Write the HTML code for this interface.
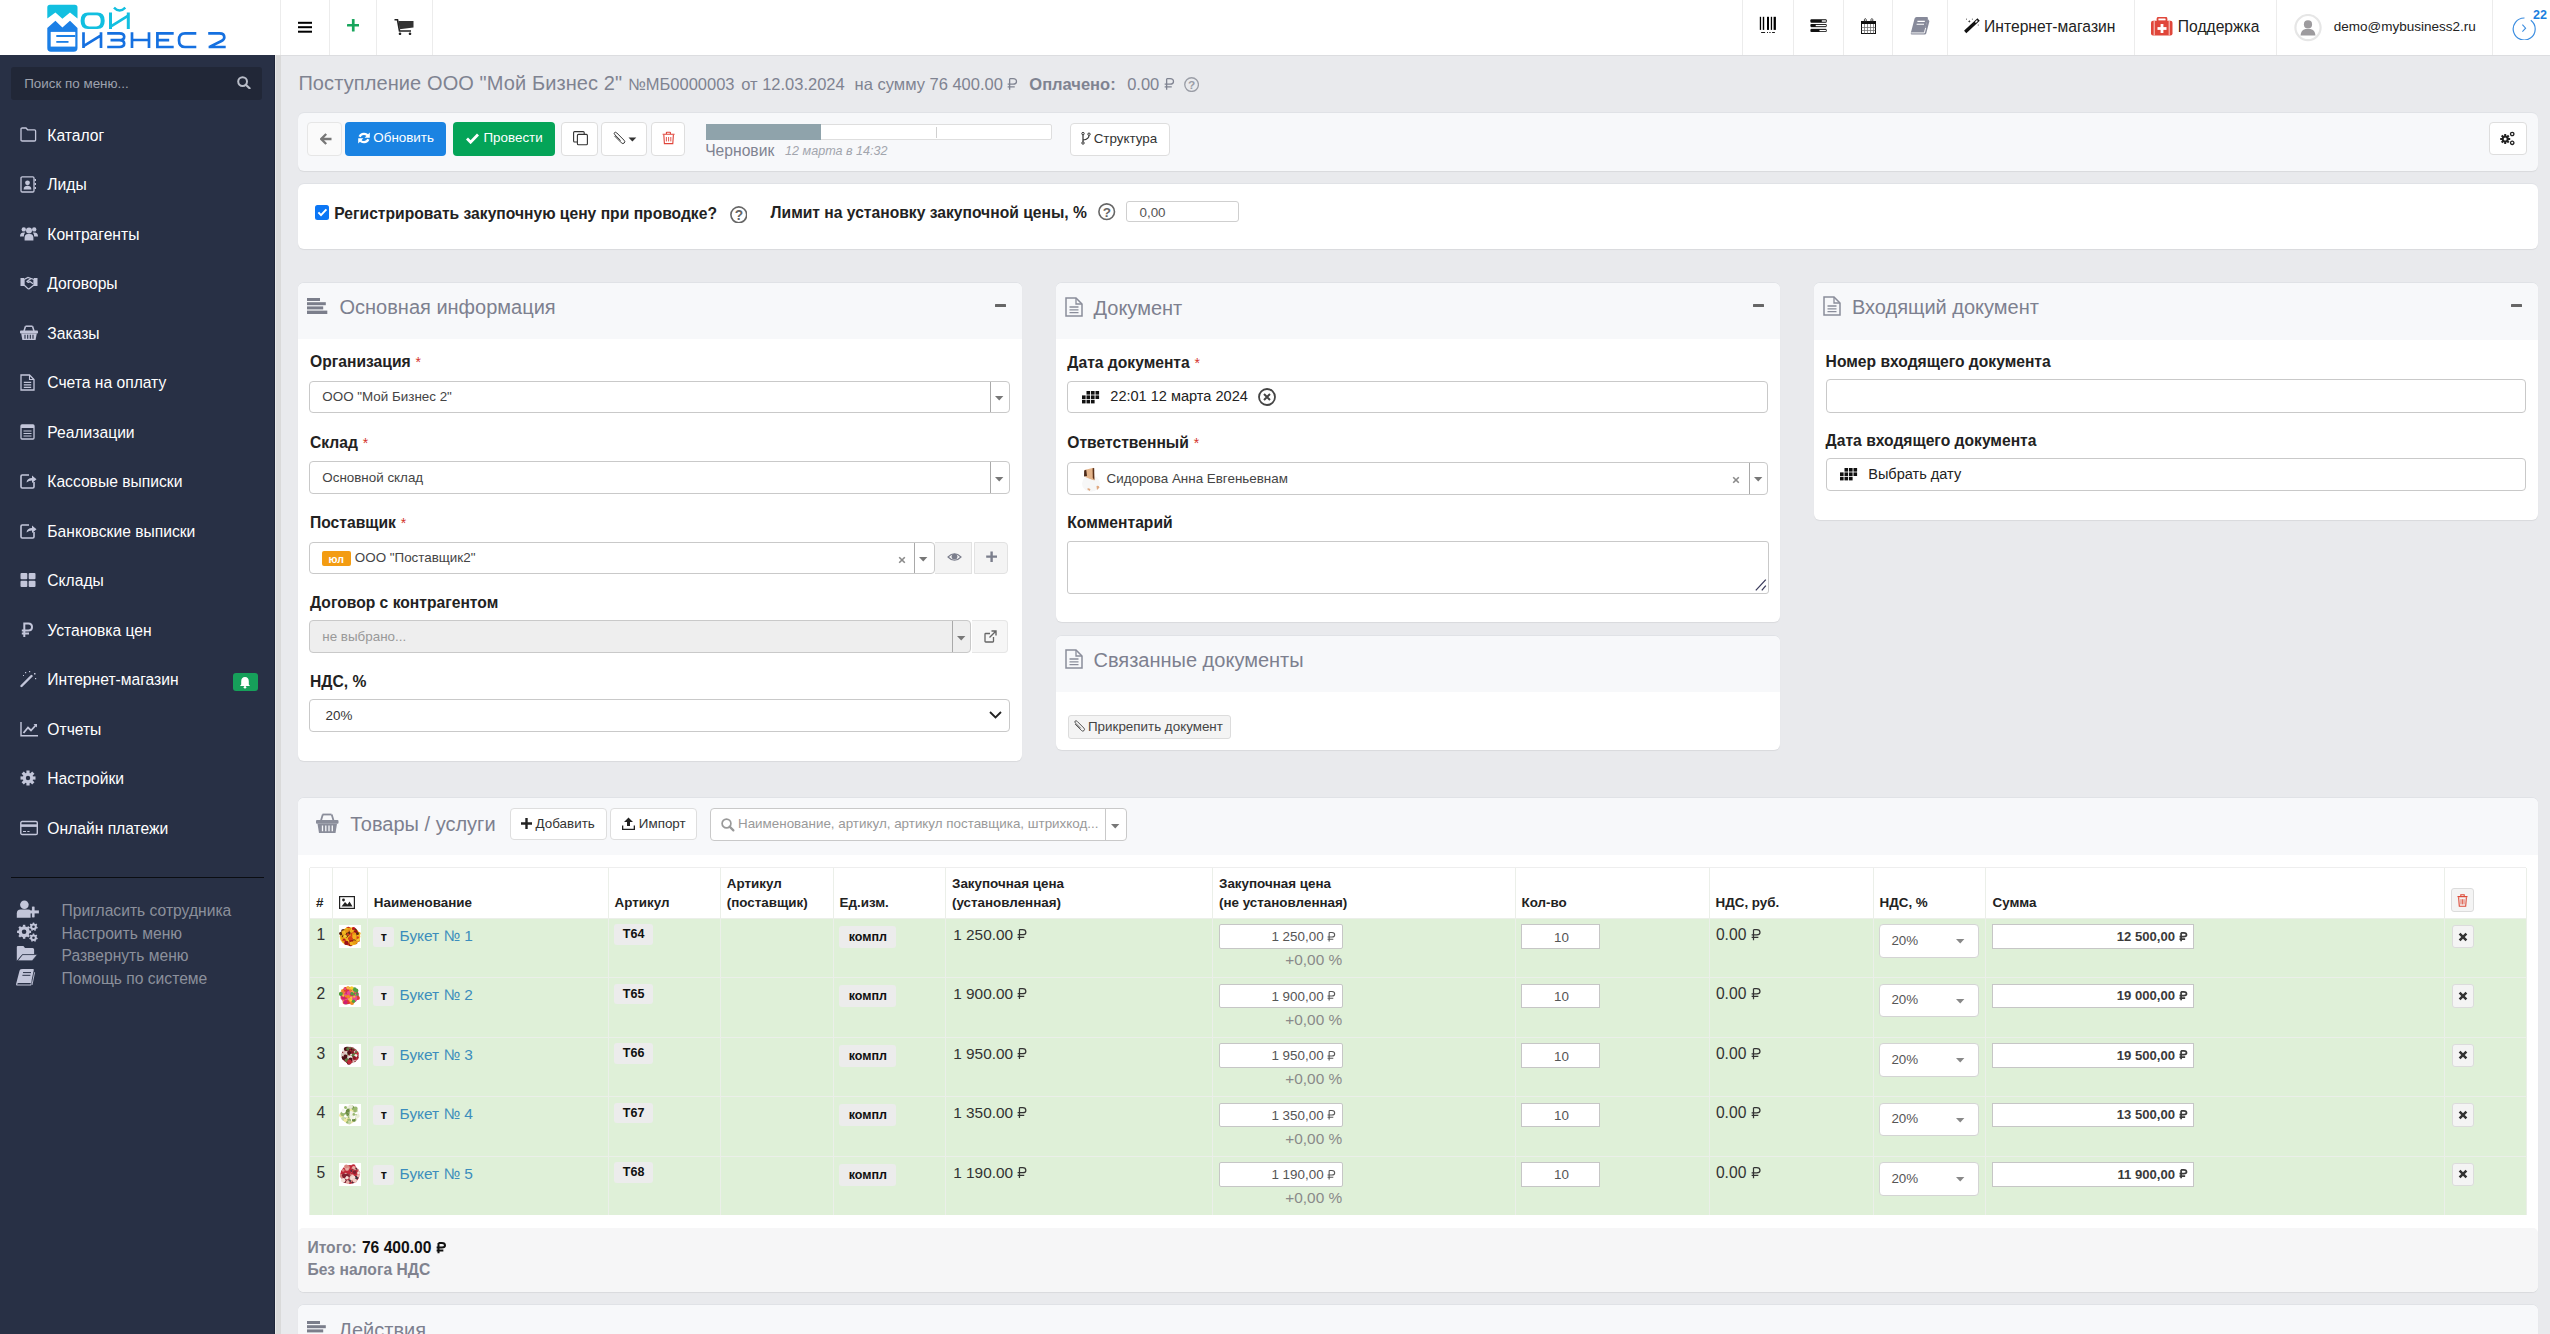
<!DOCTYPE html>
<html><head><meta charset="utf-8"><title>Поступление</title>
<style>
html,body{margin:0;padding:0;width:2550px;height:1334px;overflow:hidden;position:relative;font-family:"Liberation Sans",sans-serif;}
.t{position:absolute;white-space:nowrap;line-height:1;}
.b{position:absolute;box-sizing:border-box;}
.rub{display:inline-block;vertical-align:baseline;overflow:visible;}
</style></head><body>
<div class="b" style="left:0.00px;top:0.00px;width:2550.00px;height:1334.00px;background:#e9eaed;"></div><div class="b" style="left:0.00px;top:0.00px;width:2550.00px;height:55.00px;background:#fff;"></div><div class="b" style="left:281.00px;top:55.00px;width:2269.00px;height:1.00px;background:#dcdde0;"></div><div class="b" style="left:280.00px;top:0.00px;width:1.00px;height:55.00px;background:#ececec;"></div><div class="b" style="left:329.00px;top:0.00px;width:1.00px;height:55.00px;background:#ececec;"></div><div class="b" style="left:376.00px;top:0.00px;width:1.00px;height:55.00px;background:#ececec;"></div><div class="b" style="left:431.80px;top:0.00px;width:1.00px;height:55.00px;background:#ececec;"></div><div class="b" style="left:1742.00px;top:0.00px;width:1.00px;height:55.00px;background:#ececec;"></div><div class="b" style="left:1793.00px;top:0.00px;width:1.00px;height:55.00px;background:#ececec;"></div><div class="b" style="left:1842.80px;top:0.00px;width:1.00px;height:55.00px;background:#ececec;"></div><div class="b" style="left:1891.90px;top:0.00px;width:1.00px;height:55.00px;background:#ececec;"></div><div class="b" style="left:1947.10px;top:0.00px;width:1.00px;height:55.00px;background:#ececec;"></div><div class="b" style="left:2133.50px;top:0.00px;width:1.00px;height:55.00px;background:#ececec;"></div><div class="b" style="left:2275.80px;top:0.00px;width:1.00px;height:55.00px;background:#ececec;"></div><div class="b" style="left:2491.90px;top:0.00px;width:1.00px;height:55.00px;background:#ececec;"></div><svg class="b" style="left:0;top:0" width="275" height="55" viewBox="0 0 275 55">
<path d="M47.3,7.5 Q47.3,4.7 50,4.7 L74.8,4.7 Q77.5,4.7 77.5,7.5 L77.5,18.5 L70,12.5 L62.4,18.8 L55.4,12.5 L47.3,18.5 Z" fill="#12bfe0"/>
<path d="M47.3,28 L55.4,20.7 L62.4,27.6 L70,20.7 L77.5,28 L77.5,48 Q77.5,51.8 73.7,51.8 L51,51.8 Q47.3,51.8 47.3,48 Z" fill="#1b7fe6"/>
<path d="M50.7,31.9 L75.3,31.9 L75.3,46.6 L50.7,46.6 Z" fill="#fff"/>
<rect x="56.3" y="35" width="19" height="2" fill="#1b7fe6"/>
<rect x="56.3" y="41" width="12.2" height="1.8" fill="#1b7fe6"/>
<path fill-rule="evenodd" fill="#12bfe0" d="M88,12.6 L97.4,12.6 Q104.7,12.6 104.7,20.8 Q104.7,29.1 97.4,29.1 L88,29.1 Q80.6,29.1 80.6,20.8 Q80.6,12.6 88,12.6 Z M89.2,15.2 Q84.6,15.2 84.6,20.8 Q84.6,26.4 89.2,26.4 L96.2,26.4 Q100.7,26.4 100.7,20.8 Q100.7,15.2 96.2,15.2 Z"/>
<g fill="none" stroke="#12bfe0" stroke-width="3">
<path d="M110.5,12.6 L110.5,28.9 M128.3,12.6 L128.3,28.9"/>
<path d="M110.5,26.6 L128.3,15.6" stroke-width="2.8"/>
<path d="M114,7.6 Q119.6,13.4 125.3,7.6" stroke-width="2.5"/>
</g>
<g fill="none" stroke="#1570e0" stroke-width="2.7">
<path d="M83.5,32.3 L83.5,48 M101,32.3 L101,48 M83.5,46.2 L101,35.4"/>
<path d="M107.2,33.4 L119.5,33.4 Q124.2,33.4 124.2,36.8 Q124.2,40.2 119.5,40.2 L110.5,40.2 M119.5,40.2 Q124.2,40.2 124.2,43.6 Q124.2,47 119.5,47 L107.2,47"/>
<path d="M132,32.3 L132,48 M149,32.3 L149,48 M132,40 L149,40"/>
<path d="M173.7,33.4 L157.4,33.4 L157.4,47 L173.7,47 M157.4,40.2 L169.2,40.2"/>
<path d="M196.3,33.4 L185,33.4 Q179,33.4 179,40.2 Q179,47 185,47 L196.3,47"/>
<path d="M208.2,33.4 L219.5,33.4 Q224.3,33.4 224.3,37.2 Q224.3,39.6 221.5,41 L210,46.6 M208.6,47 L225.7,47"/>
</g>
</svg><svg class="b" style="left:298.00px;top:21.00px;" width="14.00" height="12.00" viewBox="0 0 14 12"><rect x="0" y="0.8" width="14" height="2" fill="#000"/><rect x="0" y="5.2" width="14" height="2" fill="#000"/><rect x="0" y="9.7" width="14" height="2" fill="#000"/></svg><svg class="b" style="left:346.50px;top:19.40px;" width="12.50" height="12.50" viewBox="0 0 12.5 12.5"><rect x="4.9" y="0" width="2.7" height="12.5" fill="#18a55c" rx="0.6"/><rect x="0" y="4.9" width="12.5" height="2.7" fill="#18a55c" rx="0.6"/></svg><svg class="b" style="left:393.50px;top:19.00px;" width="20.00" height="16.00" viewBox="0 0 20 16"><path d="M0.5,0.8 L3.5,0.8 L5.5,12 L17,12" fill="none" stroke="#222" stroke-width="1.6"/><path d="M4.4,2 L19.5,2 L19.5,8.5 L5.6,10.2 Z" fill="#333"/><circle cx="6" cy="14.8" r="1.3" fill="#222"/><circle cx="16" cy="14.8" r="1.3" fill="#222"/></svg><svg class="b" style="left:1755.00px;top:12.00px;overflow:visible;" width="30.00" height="28.00" viewBox="1755 12 30 28"><g fill="#000"><rect x="1759.8" y="16.8" width="1.3" height="13.1"/><rect x="1762.8" y="16.8" width="1.4" height="13.1"/><rect x="1767" y="16.8" width="2" height="13.1"/><rect x="1770.8" y="16.8" width="1.3" height="13.1"/><rect x="1773.6" y="16.8" width="2.3" height="13.1"/><rect x="1761.1" y="32" width="4" height="0.9"/><rect x="1767" y="32" width="1" height="0.9"/><rect x="1769.3" y="32" width="1.3" height="0.9"/><rect x="1772.1" y="32" width="2.8" height="0.9"/></g></svg><svg class="b" style="left:1805.00px;top:12.00px;overflow:visible;" width="30.00" height="28.00" viewBox="1805 12 30 28"><g><rect x="1810.4" y="19.3" width="16.3" height="3.5" rx="1" fill="#111"/><rect x="1810.4" y="24.1" width="16.3" height="2.9" rx="1" fill="#111"/><rect x="1810.4" y="29" width="16.3" height="3" rx="1" fill="#111"/><rect x="1821.8" y="20.3" width="4.1" height="1.4" fill="#fff"/><rect x="1815.7" y="24.9" width="10.2" height="1.3" fill="#fff"/><rect x="1819.5" y="29.9" width="6.4" height="1.3" fill="#fff"/><rect x="1811" y="27" width="15.2" height="2" fill="#d8d8d8"/></g></svg><svg class="b" style="left:1855.00px;top:12.00px;overflow:visible;" width="30.00" height="28.00" viewBox="1855 12 30 28"><rect x="1861.5" y="21.5" width="14" height="12" fill="none" stroke="#111" stroke-width="1"/><path d="M1864.5,24 V33.4 M1867.5,24 V33.4 M1870.5,24 V33.4 M1873.5,24 V33.4 M1861.6,27.5 H1875.4 M1861.6,30.5 H1875.4" stroke="#666" stroke-width="0.7"/><rect x="1861" y="21" width="15" height="3" fill="#111"/><g fill="none" stroke="#222" stroke-width="0.9"><path d="M1864.4,22 V19.6 Q1865.3,17.4 1866.2,19.6 V22 M1871,22 V19.6 Q1871.9,17.4 1872.8,19.6 V22"/></g></svg><svg class="b" style="left:1905.00px;top:12.00px;overflow:visible;" width="30.00" height="28.00" viewBox="1905 12 30 28"><path d="M1929.4,21.2 L1926.2,33.6 Q1925.9,34.6 1924.8,34.6 L1912,34.6 Q1910.4,34.6 1910.8,33 L1911.1,31.8 L1924.4,31.8 L1927.6,18.4 Z" fill="#878a9a"/><path d="M1916.6,17.1 L1926.8,17.1 Q1928.2,17.1 1927.9,18.4 L1924.6,31.3 Q1924.4,32.3 1923.2,32.3 L1911,32.3 L1914.6,18.6 Q1915,17.1 1916.6,17.1 Z" fill="#878a9a"/><path d="M1911.2,32.9 L1924.4,32.9 L1925.6,28" fill="none" stroke="#fff" stroke-width="0.9"/><path d="M1917.4,21.4 H1924.8 M1916.6,24.2 H1924" stroke="#fff" stroke-width="1.1"/></svg><svg class="b" style="left:1960.00px;top:12.00px;overflow:visible;" width="25.00" height="28.00" viewBox="1960 12 25 28"><path d="M1966.4,30.8 L1977.4,20.6" stroke="#111" stroke-width="3.3" stroke-linecap="square"/><path d="M1975.4,22.5 L1977.4,20.6" stroke="#fff" stroke-width="1.4"/><g fill="#333"><path d="M1969.3,19.9 L1969.8,20.9 L1970.8,21.3 L1969.8,21.7 L1969.3,22.7 L1968.8,21.7 L1967.8,21.3 L1968.8,20.9 Z"/><rect x="1966" y="18.7" width="0.9" height="0.9"/><rect x="1971.9" y="18.7" width="0.9" height="0.9"/><rect x="1977.8" y="24.6" width="0.9" height="0.9"/></g></svg><div class="t" style="top:18.95px;font-size:15.65px;color:#222;left:1984.10px;">Интернет-магазин</div><svg class="b" style="left:2151.00px;top:17.00px;" width="22.00" height="19.00" viewBox="0 0 22 19"><rect x="6.5" y="0.5" width="9" height="4" rx="1.5" fill="none" stroke="#e0463a" stroke-width="1.8"/><rect x="0" y="3.8" width="21.5" height="14.8" rx="2" fill="#e0463a"/><rect x="2.6" y="3.8" width="1.3" height="14.8" fill="#f6b2aa"/><rect x="17.6" y="3.8" width="1.3" height="14.8" fill="#f6b2aa"/><rect x="9.6" y="7" width="2.8" height="9" fill="#fff"/><rect x="6.5" y="10.1" width="9" height="2.8" fill="#fff"/></svg><div class="t" style="top:18.85px;font-size:15.65px;color:#222;left:2177.80px;">Поддержка</div><svg class="b" style="left:2294.00px;top:14.00px;" width="28.00" height="28.00" viewBox="0 0 28 28"><circle cx="14" cy="13.6" r="12.6" fill="#fff" stroke="#e6e6e6" stroke-width="2.2"/><circle cx="14" cy="10.4" r="4.1" fill="#9d9b9e"/><path d="M6.5,21.5 Q7,15.6 11.5,15 L16.5,15 Q21,15.6 21.5,21.5 Z" fill="#9d9b9e"/></svg><div class="t" style="top:20.17px;font-size:13.50px;color:#222;left:2333.80px;">demo@mybusiness2.ru</div><svg class="b" style="left:2511.00px;top:16.00px;" width="26.00" height="24.00" viewBox="0 0 26 24"><path d="M19.8,4.2 A11,11 0 1 1 13.5,2" fill="none" stroke="#3b8de0" stroke-width="1.2"/><path d="M11.4,8.7 L14.6,12.2 L11.4,15.6" fill="none" stroke="#3b8de0" stroke-width="1.1"/></svg><div class="t" style="top:9.22px;font-size:12.50px;color:#1b7fe0;left:2533.00px;font-weight:bold;">22</div><div class="b" style="left:0.00px;top:55.00px;width:275.00px;height:1279.00px;background:#283045;"></div><div class="b" style="left:274.00px;top:55.00px;width:1.00px;height:1279.00px;background:#1e2538;"></div><div class="b" style="left:275.00px;top:55.00px;width:1.00px;height:1279.00px;background:#e8e8e8;"></div><div class="b" style="left:276.00px;top:55.00px;width:5.00px;height:1279.00px;background:#dadada;"></div><div class="b" style="left:11.00px;top:67.00px;width:251.00px;height:33.00px;background:#212737;border-radius:3px;"></div><div class="t" style="top:76.66px;font-size:13.40px;color:#9ea2ae;left:24.20px;">Поиск по меню...</div><svg class="b" style="left:236.60px;top:76.30px;" width="14.00" height="13.00" viewBox="0 0 14 13"><circle cx="5.6" cy="5.6" r="4.4" fill="none" stroke="#b9bdc8" stroke-width="2"/><path d="M8.8,8.8 L12.6,12.3" stroke="#b9bdc8" stroke-width="2.2" stroke-linecap="round"/></svg><div class="t" style="top:127.65px;font-size:15.65px;color:#ffffff;left:47.30px;">Каталог</div><svg class="b" style="left:19.50px;top:126.60px;" width="19.00" height="17.00" viewBox="0 0 19 17"><path d="M1,2.2 Q1,1 2.2,1 L6,1 L7.6,2.8 L14.5,2.8 Q15.6,2.8 15.6,4 L15.6,13 Q15.6,14 14.5,14 L2.2,14 Q1,14 1,13 Z" fill="none" stroke="#c3c6da" stroke-width="1.3"/></svg><div class="t" style="top:177.15px;font-size:15.65px;color:#ffffff;left:47.30px;">Лиды</div><svg class="b" style="left:19.50px;top:176.10px;" width="19.00" height="17.00" viewBox="0 0 19 17"><rect x="1" y="0.8" width="13" height="15.2" rx="1.2" fill="none" stroke="#c3c6da" stroke-width="1.3"/><circle cx="7.5" cy="6.8" r="2.4" fill="#c3c6da"/><path d="M3.6,13.4 Q3.6,9.8 7.5,9.8 Q11.4,9.8 11.4,13.4 Z" fill="#c3c6da"/><rect x="14.6" y="3" width="1.4" height="2" fill="#c3c6da"/><rect x="14.6" y="7" width="1.4" height="2" fill="#c3c6da"/><rect x="14.6" y="11" width="1.4" height="2" fill="#c3c6da"/></svg><div class="t" style="top:226.65px;font-size:15.65px;color:#ffffff;left:47.30px;">Контрагенты</div><svg class="b" style="left:19.50px;top:225.60px;" width="19.00" height="17.00" viewBox="0 0 19 17"><g fill="#c3c6da"><circle cx="3.8" cy="3.4" r="2.2"/><circle cx="14.2" cy="3.4" r="2.2"/><circle cx="9" cy="4.4" r="3"/><path d="M0,10.5 Q0,6.6 3.6,6.6 L5.2,6.6 Q3.8,8 3.8,10.5 Z"/><path d="M18,10.5 Q18,6.6 14.4,6.6 L12.8,6.6 Q14.2,8 14.2,10.5 Z"/><path d="M4.6,14.5 L4.6,11.8 Q4.6,8 8,8 L10,8 Q13.4,8 13.4,11.8 L13.4,14.5 Z"/></g></svg><div class="t" style="top:276.15px;font-size:15.65px;color:#ffffff;left:47.30px;">Договоры</div><svg class="b" style="left:19.50px;top:275.10px;" width="19.00" height="17.00" viewBox="0 0 19 17"><path d="M0.5,3 L4,3 L4,11 L0.5,11 Z M17.5,3 L14,3 L14,11 L17.5,11 Z" fill="#c3c6da"/><path d="M4,4.5 L8,2.5 L11,3.5 L14,4.5 L14,10 L9.5,13.5 Q8.5,14.3 7.6,13.4 L4,10 Z" fill="none" stroke="#c3c6da" stroke-width="1.3"/><path d="M11,3.5 L7,6.5 Q8,8 10,6.5 L13,8.8" fill="none" stroke="#c3c6da" stroke-width="1.3"/></svg><div class="t" style="top:325.65px;font-size:15.65px;color:#ffffff;left:47.30px;">Заказы</div><svg class="b" style="left:19.50px;top:324.60px;" width="19.00" height="17.00" viewBox="0 0 19 17"><path d="M5.5,1.2 L12.5,1.2" stroke="#c3c6da" stroke-width="1.5"/><path d="M4,6 L5.5,1.2 M14,6 L12.5,1.2" stroke="#c3c6da" stroke-width="1.5"/><rect x="0" y="5.5" width="18" height="3" rx="0.8" fill="#c3c6da"/><path d="M1.2,8.5 L16.8,8.5 L15.6,15 L2.4,15 Z" fill="#c3c6da"/><path d="M5,9.8 V13.8 M7.7,9.8 V13.8 M10.3,9.8 V13.8 M13,9.8 V13.8" stroke="#283045" stroke-width="1.1"/></svg><div class="t" style="top:375.15px;font-size:15.65px;color:#ffffff;left:47.30px;">Счета на оплату</div><svg class="b" style="left:19.50px;top:374.10px;" width="19.00" height="17.00" viewBox="0 0 19 17"><path d="M1,1 L9.5,1 L14,5.5 L14,16 L1,16 Z" fill="none" stroke="#c3c6da" stroke-width="1.3"/><path d="M9.5,1 L9.5,5.5 L14,5.5" fill="none" stroke="#c3c6da" stroke-width="1.1"/><path d="M3.8,8.3 H11.2 M3.8,10.8 H11.2 M3.8,13.3 H11.2" stroke="#c3c6da" stroke-width="1.2"/></svg><div class="t" style="top:424.65px;font-size:15.65px;color:#ffffff;left:47.30px;">Реализации</div><svg class="b" style="left:19.50px;top:423.60px;" width="19.00" height="17.00" viewBox="0 0 19 17"><rect x="1" y="1" width="13" height="14" rx="1" fill="none" stroke="#c3c6da" stroke-width="1.3"/><rect x="1" y="1" width="13" height="3" fill="#c3c6da"/><path d="M3.5,7 H11.5 M3.5,9.5 H11.5 M3.5,12 H11.5" stroke="#c3c6da" stroke-width="1.2"/></svg><div class="t" style="top:474.15px;font-size:15.65px;color:#ffffff;left:47.30px;">Кассовые выписки</div><svg class="b" style="left:19.50px;top:473.10px;" width="19.00" height="17.00" viewBox="0 0 19 17"><path d="M9,2 L2.2,2 Q1,2 1,3.2 L1,13.8 Q1,15 2.2,15 L12.8,15 Q14,15 14,13.8 L14,9" fill="none" stroke="#c3c6da" stroke-width="1.6"/><path d="M6.5,9.5 Q7,5 12,5 L12,2.5 L16.5,6.3 L12,10 L12,7.5 Q9,7.5 6.5,9.5 Z" fill="#c3c6da"/></svg><div class="t" style="top:523.65px;font-size:15.65px;color:#ffffff;left:47.30px;">Банковские выписки</div><svg class="b" style="left:19.50px;top:522.60px;" width="19.00" height="17.00" viewBox="0 0 19 17"><path d="M9,2 L2.2,2 Q1,2 1,3.2 L1,13.8 Q1,15 2.2,15 L12.8,15 Q14,15 14,13.8 L14,9" fill="none" stroke="#c3c6da" stroke-width="1.6"/><path d="M6.5,9.5 Q7,5 12,5 L12,2.5 L16.5,6.3 L12,10 L12,7.5 Q9,7.5 6.5,9.5 Z" fill="#c3c6da"/></svg><div class="t" style="top:573.15px;font-size:15.65px;color:#ffffff;left:47.30px;">Склады</div><svg class="b" style="left:19.50px;top:572.10px;" width="19.00" height="17.00" viewBox="0 0 19 17"><g fill="#c3c6da"><rect x="0.5" y="1" width="6.8" height="6.3" rx="1"/><rect x="8.7" y="1" width="6.8" height="6.3" rx="1"/><rect x="0.5" y="8.7" width="6.8" height="6.3" rx="1"/><rect x="8.7" y="8.7" width="6.8" height="6.3" rx="1"/></g></svg><div class="t" style="top:622.65px;font-size:15.65px;color:#ffffff;left:47.30px;">Установка цен</div><svg class="b" style="left:19.50px;top:621.60px;" width="19.00" height="17.00" viewBox="0 0 19 17"><path d="M4.3,15 L4.3,1.5 L8.3,1.5 Q12,1.5 12,5 Q12,8.5 8.3,8.5 L1.8,8.5 M1.8,11.5 L9,11.5" fill="none" stroke="#c3c6da" stroke-width="2"/></svg><div class="t" style="top:672.15px;font-size:15.65px;color:#ffffff;left:47.30px;">Интернет-магазин</div><svg class="b" style="left:19.50px;top:671.10px;" width="19.00" height="17.00" viewBox="0 0 19 17"><path d="M1.5,15 L11.5,5" stroke="#c3c6da" stroke-width="2.4" stroke-linecap="round"/><g fill="#c3c6da"><rect x="5" y="1" width="1.2" height="1.2"/><rect x="9" y="0" width="1.2" height="1.2"/><rect x="15" y="7" width="1.2" height="1.2"/><rect x="14" y="2" width="1.5" height="1.5"/><rect x="3" y="4" width="1" height="1"/></g></svg><div class="t" style="top:721.65px;font-size:15.65px;color:#ffffff;left:47.30px;">Отчеты</div><svg class="b" style="left:19.50px;top:720.60px;" width="19.00" height="17.00" viewBox="0 0 19 17"><path d="M1,1 L1,14.8 L18,14.8" fill="none" stroke="#c3c6da" stroke-width="1.4"/><path d="M3.5,12 L8,6.5 L11,9.5 L16.5,3.5" fill="none" stroke="#c3c6da" stroke-width="1.8"/><path d="M13.5,3 L17,3 L17,6.5 Z" fill="#c3c6da"/></svg><div class="t" style="top:771.15px;font-size:15.65px;color:#ffffff;left:47.30px;">Настройки</div><svg class="b" style="left:19.50px;top:770.10px;" width="19.00" height="17.00" viewBox="0 0 19 17"><g transform="translate(8,8)"><circle r="5.2" fill="#c3c6da"/><g fill="#c3c6da"><rect x="-1.6" y="-7.5" width="3.2" height="3.5" transform="rotate(0)"/><rect x="-1.6" y="-7.5" width="3.2" height="3.5" transform="rotate(45)"/><rect x="-1.6" y="-7.5" width="3.2" height="3.5" transform="rotate(90)"/><rect x="-1.6" y="-7.5" width="3.2" height="3.5" transform="rotate(135)"/><rect x="-1.6" y="-7.5" width="3.2" height="3.5" transform="rotate(180)"/><rect x="-1.6" y="-7.5" width="3.2" height="3.5" transform="rotate(225)"/><rect x="-1.6" y="-7.5" width="3.2" height="3.5" transform="rotate(270)"/><rect x="-1.6" y="-7.5" width="3.2" height="3.5" transform="rotate(315)"/></g><circle r="2.2" fill="#283045"/></g></svg><div class="t" style="top:820.65px;font-size:15.65px;color:#ffffff;left:47.30px;">Онлайн платежи</div><svg class="b" style="left:19.50px;top:819.60px;" width="19.00" height="17.00" viewBox="0 0 19 17"><rect x="0.8" y="1.5" width="16.5" height="13" rx="1.3" fill="none" stroke="#c3c6da" stroke-width="1.4"/><rect x="0.8" y="4.3" width="16.5" height="2.6" fill="#c3c6da"/><path d="M3,11.5 H6 M7.3,11.5 H9.5" stroke="#c3c6da" stroke-width="1"/></svg><div class="b" style="left:232.70px;top:673.20px;width:25.30px;height:17.80px;background:#16a05a;border-radius:3px;"></div><svg class="b" style="left:239.00px;top:675.50px;" width="12.00" height="13.00" viewBox="0 0 12 13"><path d="M6,1 Q9.8,1 9.8,5.5 L9.8,8.5 L11,10 L1,10 L2.2,8.5 L2.2,5.5 Q2.2,1 6,1 Z" fill="#fff"/><circle cx="6" cy="11.3" r="1.3" fill="#fff"/></svg><div class="b" style="left:11.00px;top:876.60px;width:253.00px;height:1.20px;background:#0b0d12;"></div><div class="t" style="top:902.75px;font-size:15.65px;color:#8c909c;left:61.50px;">Пригласить сотрудника</div><div class="t" style="top:925.55px;font-size:15.65px;color:#8c909c;left:61.50px;">Настроить меню</div><div class="t" style="top:947.55px;font-size:15.65px;color:#8c909c;left:61.50px;">Развернуть меню</div><div class="t" style="top:970.65px;font-size:15.65px;color:#8c909c;left:61.50px;">Помощь по системе</div><svg class="b" style="left:12.00px;top:895.00px;overflow:visible;" width="32.00" height="95.00" viewBox="12 895 32 95"><circle cx="24.4" cy="904.8" r="4.3" fill="#c3c6da"/><path d="M16.8,917.7 L16.8,913.5 Q16.8,909.6 20.6,909.6 L28.2,909.6 Q30.2,909.6 30.6,911 L30.6,917.7 Z" fill="#c3c6da"/><rect x="31.8" y="906.3" width="3" height="11.4" fill="#c3c6da" stroke="#283045" stroke-width="0.8"/><rect x="27.5" y="910.4" width="11.4" height="3" fill="#c3c6da"/><rect x="32.2" y="906.7" width="2.2" height="10.6" fill="#c3c6da"/><g transform="translate(24.1,931.8)"><circle r="5.6" fill="#c3c6da"/><rect x="-1.2" y="-7" width="2.4" height="2" fill="#c3c6da" transform="rotate(0)"/><rect x="-1.2" y="-7" width="2.4" height="2" fill="#c3c6da" transform="rotate(45)"/><rect x="-1.2" y="-7" width="2.4" height="2" fill="#c3c6da" transform="rotate(90)"/><rect x="-1.2" y="-7" width="2.4" height="2" fill="#c3c6da" transform="rotate(135)"/><rect x="-1.2" y="-7" width="2.4" height="2" fill="#c3c6da" transform="rotate(180)"/><rect x="-1.2" y="-7" width="2.4" height="2" fill="#c3c6da" transform="rotate(225)"/><rect x="-1.2" y="-7" width="2.4" height="2" fill="#c3c6da" transform="rotate(270)"/><rect x="-1.2" y="-7" width="2.4" height="2" fill="#c3c6da" transform="rotate(315)"/><circle r="2.3" fill="#283045"/></g><g transform="translate(33.5,926.8)"><circle r="3.3" fill="#c3c6da"/><rect x="-0.75" y="-4.2" width="1.5" height="1.5" fill="#c3c6da" transform="rotate(0)"/><rect x="-0.75" y="-4.2" width="1.5" height="1.5" fill="#c3c6da" transform="rotate(51.4286)"/><rect x="-0.75" y="-4.2" width="1.5" height="1.5" fill="#c3c6da" transform="rotate(102.857)"/><rect x="-0.75" y="-4.2" width="1.5" height="1.5" fill="#c3c6da" transform="rotate(154.286)"/><rect x="-0.75" y="-4.2" width="1.5" height="1.5" fill="#c3c6da" transform="rotate(205.714)"/><rect x="-0.75" y="-4.2" width="1.5" height="1.5" fill="#c3c6da" transform="rotate(257.143)"/><rect x="-0.75" y="-4.2" width="1.5" height="1.5" fill="#c3c6da" transform="rotate(308.571)"/><circle r="1.3" fill="#283045"/></g><g transform="translate(33.5,937.7)"><circle r="3.3" fill="#c3c6da"/><rect x="-0.75" y="-4.2" width="1.5" height="1.5" fill="#c3c6da" transform="rotate(0)"/><rect x="-0.75" y="-4.2" width="1.5" height="1.5" fill="#c3c6da" transform="rotate(51.4286)"/><rect x="-0.75" y="-4.2" width="1.5" height="1.5" fill="#c3c6da" transform="rotate(102.857)"/><rect x="-0.75" y="-4.2" width="1.5" height="1.5" fill="#c3c6da" transform="rotate(154.286)"/><rect x="-0.75" y="-4.2" width="1.5" height="1.5" fill="#c3c6da" transform="rotate(205.714)"/><rect x="-0.75" y="-4.2" width="1.5" height="1.5" fill="#c3c6da" transform="rotate(257.143)"/><rect x="-0.75" y="-4.2" width="1.5" height="1.5" fill="#c3c6da" transform="rotate(308.571)"/><circle r="1.3" fill="#283045"/></g><path d="M16.8,960.8 L16.8,947 Q16.8,945.9 17.9,945.9 L23.4,945.9 L25,948 L32.6,948 Q34.1,948 34.1,949.5 L34.1,954.2 L22.3,954.2 Z" fill="#c3c6da"/><path d="M17.6,960.8 L22.6,954.6 L37.4,954.6 L32.2,960.8 Z" fill="#c3c6da" stroke="#283045" stroke-width="0.7"/><path d="M22.8,969 L33,969 Q34,969 33.8,970 L31,983 L18.5,983 Q16.8,983 17.2,984.6 L30.5,984.6 L31.8,979 L31.2,985.6 L17.8,985.6 Q15.6,985.6 16.2,983.4 L19.6,970.4 Q20,969 22.8,969 Z" fill="#c3c6da"/><path d="M34.6,972.3 L32,985" stroke="#c3c6da" stroke-width="0.9"/><path d="M23,972.6 H31 M22.4,975.3 H30.4" stroke="#283045" stroke-width="1"/></svg><div class="t" style="top:72.77px;font-size:20.00px;color:#7f8391;left:298.40px;letter-spacing:0.1px;">Поступление ООО "Мой Бизнес 2"</div><div class="t" style="top:75.83px;font-size:16.50px;color:#7f8391;left:628.00px;">№МБ0000003</div><div class="t" style="top:75.83px;font-size:16.50px;color:#7f8391;left:741.20px;">от 12.03.2024</div><div class="t" style="top:75.83px;font-size:16.50px;color:#7f8391;left:854.60px;">на сумму 76 400.00 <svg class="rub" viewBox="0 0 620 716" width="0.62em" height="0.716em"><path d="M160,40 V716 M160,40 H370 Q575,40 575,222 Q575,372 370,372 H40 M40,540 H470" fill="none" stroke="currentColor" stroke-width="80"/></svg></div><div class="t" style="top:75.83px;font-size:16.50px;color:#7f8391;left:1029.30px;font-weight:bold;">Оплачено:</div><div class="t" style="top:75.83px;font-size:16.50px;color:#7f8391;left:1127.20px;">0.00 <svg class="rub" viewBox="0 0 620 716" width="0.62em" height="0.716em"><path d="M160,40 V716 M160,40 H370 Q575,40 575,222 Q575,372 370,372 H40 M40,540 H470" fill="none" stroke="currentColor" stroke-width="80"/></svg></div><svg class="b" style="left:1183.60px;top:77.20px;" width="15.20" height="15.20" viewBox="0 0 15.2 15.2"><circle cx="7.6" cy="7.6" r="6.85" fill="none" stroke="#9a9da6" stroke-width="1.3"/><text x="7.7" y="12.008" font-family="Liberation Sans" font-weight="bold" font-size="11.856" fill="#9a9da6" text-anchor="middle">?</text></svg><div class="b" style="left:298.00px;top:112.80px;width:2240.00px;height:58.20px;background:#f7f8fa;border-radius:6px;box-shadow:0 1px 1px rgba(0,0,0,0.07), 0 -1px 0 rgba(30,40,80,0.04);"></div><div class="b" style="left:307.40px;top:121.90px;width:34.90px;height:33.70px;border:1px solid #e6e6e6;border-radius:4px;background:#fafafa;"></div><svg class="b" style="left:319.50px;top:133.00px;" width="12.00" height="12.00" viewBox="0 0 12 12"><path d="M6.2,1 L1.2,6 L6.2,11 M1.5,6 L11.5,6" fill="none" stroke="#777" stroke-width="2.3" stroke-linejoin="miter"/></svg><div class="b" style="left:345.00px;top:121.90px;width:100.60px;height:33.70px;background:#1a83e2;border-radius:4px;"></div><svg class="b" style="left:357.50px;top:131.60px;" width="12.00" height="12.00" viewBox="0 0 12 12"><path d="M10.2,4.3 A4.8,4.8 0 0 0 1.6,4.8" fill="none" stroke="#fff" stroke-width="2.3"/><path d="M1.8,7.7 A4.8,4.8 0 0 0 10.4,7.2" fill="none" stroke="#fff" stroke-width="2.3"/><path d="M11.8,0.6 L11.8,5.8 L6.6,5.8 Z" fill="#fff"/><path d="M0.2,11.4 L0.2,6.2 L5.4,6.2 Z" fill="#fff"/></svg><div class="t" style="top:131.46px;font-size:13.40px;color:#fff;left:373.30px;">Обновить</div><div class="b" style="left:452.90px;top:121.90px;width:101.90px;height:33.70px;background:#04a458;border-radius:4px;"></div><svg class="b" style="left:466.00px;top:132.50px;" width="13.00" height="11.00" viewBox="0 0 13 11"><path d="M1,5.5 L4.6,9.2 L12,1.5" fill="none" stroke="#fff" stroke-width="2.8"/></svg><div class="t" style="top:131.46px;font-size:13.40px;color:#fff;left:483.50px;">Провести</div><div class="b" style="left:561.20px;top:121.90px;width:37.00px;height:33.70px;border:1px solid #dedede;border-radius:4px;background:#fff;"></div><svg class="b" style="left:570.00px;top:128.00px;overflow:visible;" width="22.00" height="20.00" viewBox="570 128 22 20"><rect x="573.6" y="131.6" width="10.6" height="10.4" rx="1" fill="none" stroke="#333" stroke-width="1.1"/><rect x="577.4" y="134.4" width="10" height="10.4" rx="1" fill="#fff" stroke="#333" stroke-width="1.1"/></svg><div class="b" style="left:601.40px;top:121.90px;width:45.80px;height:33.70px;border:1px solid #dedede;border-radius:4px;background:#fff;"></div><svg class="b" style="left:610.00px;top:128.00px;overflow:visible;" width="30.00" height="20.00" viewBox="610 128 30 20"><g transform="translate(619.4,138.2) scale(0.85) rotate(-45) translate(-619.2,-137)"><path d="M617,131.5 L617,143 Q617,145.5 619.2,145.5 Q621.4,145.5 621.4,143 L621.4,131 Q621.4,128.8 619.8,128.8 Q618.3,128.8 618.3,131 L618.3,140.5" fill="none" stroke="#333" stroke-width="1.1" transform="translate(0,-0.5)"/></g></svg><svg class="b" style="left:627.50px;top:136.50px;overflow:visible;" width="8.50" height="5.00" viewBox="627.5 136.5 8.5 5"><path d="M628,137 L635.8,137 L631.9,141 Z" fill="#333"/></svg><div class="b" style="left:651.30px;top:121.90px;width:33.90px;height:33.70px;border:1px solid #dedede;border-radius:4px;background:#fff;"></div><svg class="b" style="left:660.00px;top:128.00px;overflow:visible;" width="18.00" height="20.00" viewBox="660 128 18 20"><g fill="none" stroke="#e0443a" stroke-width="1.1"><path d="M662.6,134.3 H674.6 M666.4,134.3 V132.6 Q666.4,132.2 666.8,132.2 H670 Q670.4,132.2 670.4,132.6 V134.3"/><path d="M663.8,134.6 L664.4,143.6 H672.8 L673.4,134.6"/><path d="M666.4,137 V141.4 M668.6,137 V141.4 M670.8,137 V141.4" stroke-width="0.9"/></g></svg><div class="b" style="left:705.60px;top:123.50px;width:346.80px;height:16.90px;background:#fff;border:1px solid #dedede;border-radius:2px;"></div><div class="b" style="left:706.20px;top:124.00px;width:114.70px;height:16.00px;background:#8fa3ab;"></div><div class="b" style="left:936.00px;top:127.00px;width:1.00px;height:11.00px;background:#d0d0d0;"></div><div class="t" style="top:143.45px;font-size:15.65px;color:#7f8391;left:705.20px;">Черновик</div><div class="t" style="top:145.43px;font-size:12.60px;color:#a2a5ad;left:785.00px;font-style:italic;">12 марта в 14:32</div><div class="b" style="left:1070.30px;top:122.50px;width:99.30px;height:33.00px;border:1px solid #dedede;border-radius:4px;background:#fff;"></div><svg class="b" style="left:1080.50px;top:132.00px;" width="10.00" height="13.00" viewBox="0 0 10 13"><circle cx="2" cy="1.6" r="1.2" fill="none" stroke="#333" stroke-width="1"/><circle cx="2" cy="11" r="1.2" fill="none" stroke="#333" stroke-width="1"/><circle cx="8" cy="2.2" r="1.2" fill="none" stroke="#333" stroke-width="1"/><path d="M2,2.8 V9.8 M8,3.4 Q8,7 2.2,8" fill="none" stroke="#333" stroke-width="1.2"/></svg><div class="t" style="top:131.86px;font-size:13.40px;color:#333;left:1093.70px;">Структура</div><div class="b" style="left:2488.50px;top:122.20px;width:38.00px;height:33.30px;border:1px solid #dedede;border-radius:4px;background:#fff;"></div><svg class="b" style="left:2500.00px;top:131.00px;" width="16.00" height="15.00" viewBox="0 0 16 15"><g transform="translate(5.2,8)"><circle r="3.5" fill="#222"/><g fill="#222"><rect x="-1" y="-5" width="2" height="2.2" transform="rotate(0)"/><rect x="-1" y="-5" width="2" height="2.2" transform="rotate(45)"/><rect x="-1" y="-5" width="2" height="2.2" transform="rotate(90)"/><rect x="-1" y="-5" width="2" height="2.2" transform="rotate(135)"/><rect x="-1" y="-5" width="2" height="2.2" transform="rotate(180)"/><rect x="-1" y="-5" width="2" height="2.2" transform="rotate(225)"/><rect x="-1" y="-5" width="2" height="2.2" transform="rotate(270)"/><rect x="-1" y="-5" width="2" height="2.2" transform="rotate(315)"/></g><circle r="1.5" fill="#fff"/></g><g transform="translate(12.2,3)"><circle r="1.7" fill="none" stroke="#222" stroke-width="1.3"/></g><g transform="translate(12.2,11.8)"><circle r="1.7" fill="none" stroke="#222" stroke-width="1.3"/></g></svg><div class="b" style="left:298.00px;top:184.00px;width:2240.00px;height:65.00px;background:#fff;border-radius:6px;box-shadow:0 1px 1px rgba(0,0,0,0.07), 0 -1px 0 rgba(30,40,80,0.04);"></div><div class="b" style="left:314.80px;top:205.30px;width:14.50px;height:14.40px;background:#0b76f5;border-radius:2.5px;"></div><svg class="b" style="left:315.80px;top:206.30px;" width="12.50" height="12.50" viewBox="0 0 12.5 12.5"><path d="M2.4,6.4 L5,9.1 L10.4,3.4" fill="none" stroke="#fff" stroke-width="2"/></svg><div class="t" style="top:206.05px;font-size:15.65px;color:#222;left:334.30px;font-weight:bold;">Регистрировать закупочную цену при проводке?</div><svg class="b" style="left:729.80px;top:205.80px;" width="17.60" height="17.60" viewBox="0 0 17.6 17.6"><circle cx="8.8" cy="8.8" r="7.9" fill="none" stroke="#666" stroke-width="1.6"/><text x="8.9" y="13.904" font-family="Liberation Sans" font-weight="bold" font-size="13.728" fill="#666" text-anchor="middle">?</text></svg><div class="t" style="top:204.65px;font-size:15.65px;color:#222;left:770.60px;font-weight:bold;">Лимит на установку закупочной цены, %</div><svg class="b" style="left:1098.40px;top:203.30px;" width="17.40" height="17.40" viewBox="0 0 17.4 17.4"><circle cx="8.7" cy="8.7" r="7.8" fill="none" stroke="#666" stroke-width="1.6"/><text x="8.8" y="13.746" font-family="Liberation Sans" font-weight="bold" font-size="13.572" fill="#666" text-anchor="middle">?</text></svg><div class="b" style="left:1126.00px;top:201.10px;width:112.50px;height:21.20px;border:1px solid #cfcfcf;border-radius:3px;background:#fff;"></div><div class="t" style="top:205.96px;font-size:13.40px;color:#555;left:1139.50px;">0,00</div><div class="b" style="left:298.00px;top:283.20px;width:723.60px;height:477.80px;background:#fff;border-radius:6px;box-shadow:0 1px 1px rgba(0,0,0,0.07), 0 -1px 0 rgba(30,40,80,0.04);"></div><div class="b" style="left:298.00px;top:283.20px;width:723.60px;height:56.20px;background:#f7f8fa;border-radius:6px 6px 0 0;"></div><svg class="b" style="left:307.10px;top:298.20px;" width="21.00" height="16.50" viewBox="0 0 21 16.5"><g fill="#7b7e8b"><rect x="0" y="0" width="13" height="3"/><rect x="0" y="4.2" width="18.8" height="3"/><rect x="0" y="8.4" width="16.2" height="3"/><rect x="0" y="12.6" width="20.3" height="3.4"/></g></svg><div class="t" style="top:297.27px;font-size:20.00px;color:#7d808f;left:339.50px;">Основная информация</div><div class="b" style="left:994.50px;top:303.70px;width:11.50px;height:3.00px;background:#666;border-radius:0.5px;"></div><div class="t" style="top:354.35px;font-size:15.65px;color:#222;left:310.00px;font-weight:bold;">Организация</div><div class="t" style="top:355.25px;font-size:14.00px;color:#d3312b;left:415.47px;">*</div><div class="b" style="left:309.10px;top:381.20px;width:701.30px;height:32.30px;border:1px solid #c9c9c9;border-radius:4px;background:#fff;"></div><div class="b" style="left:990.00px;top:382.20px;width:1.00px;height:30.30px;background:#a9a9a9;"></div><svg class="b" style="left:995.20px;top:396.35px;" width="9.00" height="5.00" viewBox="0 0 9 5"><path d="M0,0 L8.4,0 L4.2,4.6 Z" fill="#777"/></svg><div class="t" style="top:389.86px;font-size:13.40px;color:#444;left:322.30px;">ООО "Мой Бизнес 2"</div><div class="t" style="top:434.75px;font-size:15.65px;color:#222;left:310.00px;font-weight:bold;">Склад</div><div class="t" style="top:435.65px;font-size:14.00px;color:#d3312b;left:362.71px;">*</div><div class="b" style="left:309.10px;top:461.20px;width:701.30px;height:32.90px;border:1px solid #c9c9c9;border-radius:4px;background:#fff;"></div><div class="b" style="left:990.00px;top:462.20px;width:1.00px;height:30.90px;background:#a9a9a9;"></div><svg class="b" style="left:995.20px;top:476.65px;" width="9.00" height="5.00" viewBox="0 0 9 5"><path d="M0,0 L8.4,0 L4.2,4.6 Z" fill="#777"/></svg><div class="t" style="top:470.66px;font-size:13.40px;color:#444;left:322.30px;">Основной склад</div><div class="t" style="top:515.35px;font-size:15.65px;color:#222;left:310.00px;font-weight:bold;">Поставщик</div><div class="t" style="top:516.25px;font-size:14.00px;color:#d3312b;left:400.75px;">*</div><div class="b" style="left:309.10px;top:541.70px;width:625.90px;height:32.60px;border:1px solid #c9c9c9;border-radius:4px;background:#fff;"></div><div class="b" style="left:914.00px;top:542.70px;width:1.00px;height:30.60px;background:#a9a9a9;"></div><svg class="b" style="left:919.20px;top:557.00px;" width="9.00" height="5.00" viewBox="0 0 9 5"><path d="M0,0 L8.4,0 L4.2,4.6 Z" fill="#777"/></svg><svg class="b" style="left:897.70px;top:556.00px;" width="8.00" height="8.00" viewBox="0 0 8 8"><path d="M1.2,1.2 L6.8,6.8 M6.8,1.2 L1.2,6.8" stroke="#8a8a8a" stroke-width="1.6"/></svg><div class="b" style="left:322.00px;top:551.10px;width:28.70px;height:15.00px;background:#f39c12;border-radius:2px;"></div><div class="t" style="top:553.71px;font-size:10.50px;color:#fff;left:336.30px;width:0;display:flex;justify-content:center;font-weight:bold;">юл</div><div class="t" style="top:550.86px;font-size:13.40px;color:#444;left:354.80px;">ООО "Поставщик2"</div><div class="b" style="left:935.40px;top:541.70px;width:36.80px;height:32.60px;background:#f4f4f4;border:1px solid #e2e2e2;border-left:none;"></div><svg class="b" style="left:946.50px;top:552.00px;" width="15.00" height="10.00" viewBox="0 0 15 10"><path d="M1,5 Q7.5,-1.6 14,5 Q7.5,11.6 1,5 Z" fill="none" stroke="#7b7e8c" stroke-width="1.1"/><circle cx="7.5" cy="4.6" r="2.9" fill="#7b7e8c"/></svg><div class="b" style="left:974.40px;top:542.00px;width:33.70px;height:32.30px;background:#f4f4f4;border:1px solid #e2e2e2;border-radius:0 4px 4px 0;"></div><svg class="b" style="left:986.00px;top:551.00px;" width="12.00" height="12.00" viewBox="0 0 12 12"><path d="M5.6,0.5 V11 M0.2,5.6 H11" stroke="#7b7e8c" stroke-width="2.4"/></svg><div class="t" style="top:594.75px;font-size:15.65px;color:#222;left:310.00px;font-weight:bold;">Договор с контрагентом</div><div class="b" style="left:309.10px;top:620.40px;width:662.30px;height:32.60px;border:1px solid #c9c9c9;border-radius:4px;background:#eeeeee;"></div><div class="b" style="left:951.50px;top:621.40px;width:1.00px;height:30.60px;background:#a9a9a9;"></div><svg class="b" style="left:956.70px;top:635.70px;" width="9.00" height="5.00" viewBox="0 0 9 5"><path d="M0,0 L8.4,0 L4.2,4.6 Z" fill="#777"/></svg><div class="t" style="top:629.66px;font-size:13.40px;color:#999;left:322.30px;">не выбрано...</div><div class="b" style="left:972.00px;top:620.40px;width:36.10px;height:32.60px;background:#f6f6f6;border:1px solid #e6e6e6;border-left:none;border-radius:0 4px 4px 0;"></div><svg class="b" style="left:984.00px;top:629.50px;" width="13.00" height="13.00" viewBox="0 0 13 13"><path d="M9.5,7 V11.3 Q9.5,12 8.8,12 L1.7,12 Q1,12 1,11.3 L1,4.2 Q1,3.5 1.7,3.5 L6,3.5" fill="none" stroke="#666" stroke-width="1.3"/><path d="M5.5,7.5 L11.5,1.5 M7.5,1 H12 V5.5" fill="none" stroke="#666" stroke-width="1.4"/></svg><div class="t" style="top:673.55px;font-size:15.65px;color:#222;left:310.00px;font-weight:bold;">НДС, %</div><div class="b" style="left:309.10px;top:699.20px;width:701.30px;height:32.90px;border:1px solid #c9c9c9;border-radius:4px;background:#fff;"></div><div class="t" style="top:708.66px;font-size:13.40px;color:#333;left:325.60px;">20%</div><svg class="b" style="left:989.00px;top:711.00px;" width="13.00" height="8.00" viewBox="0 0 13 8"><path d="M1,1 L6.5,6.5 L12,1" fill="none" stroke="#222" stroke-width="1.8"/></svg><div class="b" style="left:1056.20px;top:283.20px;width:723.60px;height:338.40px;background:#fff;border-radius:6px;box-shadow:0 1px 1px rgba(0,0,0,0.07), 0 -1px 0 rgba(30,40,80,0.04);"></div><div class="b" style="left:1056.20px;top:283.20px;width:723.60px;height:56.20px;background:#f7f8fa;border-radius:6px 6px 0 0;"></div><svg class="b" style="left:1064.50px;top:296.50px;" width="19.00" height="20.00" viewBox="0 0 19 20"><path d="M1,1 L11,1 L17,7 L17,19 L1,19 Z" fill="none" stroke="#8a8d9a" stroke-width="1.5"/><path d="M11,1 L11,7 L17,7" fill="none" stroke="#8a8d9a" stroke-width="1.3"/><path d="M4.5,10 H13.5 M4.5,12.8 H13.5 M4.5,15.6 H13.5" stroke="#8a8d9a" stroke-width="1.3"/></svg><div class="t" style="top:297.57px;font-size:20.00px;color:#7d808f;left:1093.50px;">Документ</div><div class="b" style="left:1752.50px;top:303.70px;width:11.50px;height:3.00px;background:#666;border-radius:0.5px;"></div><div class="t" style="top:354.65px;font-size:15.65px;color:#222;left:1067.30px;font-weight:bold;">Дата документа</div><div class="t" style="top:355.55px;font-size:14.00px;color:#d3312b;left:1194.59px;">*</div><div class="b" style="left:1067.30px;top:381.40px;width:701.20px;height:32.10px;border:1px solid #c9c9c9;border-radius:4px;background:#fff;"></div><svg class="b" style="left:1081.80px;top:390.50px;" width="18.00" height="13.00" viewBox="0 0 18 13"><g fill="#111"><rect x="4.5" y="0" width="3.6" height="3.6"/><rect x="9" y="0" width="3.6" height="3.6"/><rect x="13.5" y="0" width="3.6" height="3.6"/><rect x="0" y="4.4" width="3.6" height="3.6"/><rect x="4.5" y="4.4" width="3.6" height="3.6"/><rect x="9" y="4.4" width="3.6" height="3.6"/><rect x="13.5" y="4.4" width="3.6" height="3.6"/><rect x="0" y="8.8" width="3.6" height="3.6"/><rect x="4.5" y="8.8" width="3.6" height="3.6"/><rect x="9" y="8.8" width="3.6" height="3.6"/></g></svg><div class="t" style="top:389.48px;font-size:14.55px;color:#222;left:1110.30px;">22:01 12 марта 2024</div><svg class="b" style="left:1258.00px;top:387.90px;" width="18.00" height="18.00" viewBox="0 0 18 18"><circle cx="9" cy="9" r="8" fill="none" stroke="#444" stroke-width="1.8"/><path d="M6,6 L12,12 M12,6 L6,12" stroke="#444" stroke-width="2"/></svg><div class="t" style="top:434.75px;font-size:15.65px;color:#222;left:1067.30px;font-weight:bold;">Ответственный</div><div class="t" style="top:435.65px;font-size:14.00px;color:#d3312b;left:1193.68px;">*</div><div class="b" style="left:1067.30px;top:461.50px;width:701.20px;height:33.10px;border:1px solid #c9c9c9;border-radius:4px;background:#fff;"></div><div class="b" style="left:1748.70px;top:462.50px;width:1.00px;height:31.10px;background:#a9a9a9;"></div><svg class="b" style="left:1753.90px;top:477.05px;" width="9.00" height="5.00" viewBox="0 0 9 5"><path d="M0,0 L8.4,0 L4.2,4.6 Z" fill="#777"/></svg><svg class="b" style="left:1731.50px;top:476.05px;" width="8.00" height="8.00" viewBox="0 0 8 8"><path d="M1.2,1.2 L6.8,6.8 M6.8,1.2 L1.2,6.8" stroke="#8a8a8a" stroke-width="1.6"/></svg><svg class="b" style="left:1075.00px;top:464.00px;overflow:visible;" width="30.00" height="30.00" viewBox="1075 464 30 30"><ellipse cx="1091" cy="483.5" rx="9" ry="8.2" fill="#f7f7f7"/><path d="M1084.5,470 L1093.5,467.8 L1094.5,480.5 L1090,479 L1085.5,477 Z" fill="#e4b48a"/><path d="M1084.2,470.5 L1086.2,469.8 L1087,476 L1084,476.5 Z" fill="#4a2a1a"/><path d="M1092.6,468.2 L1094.2,468 L1094.4,480 L1092.8,478 Z" fill="#5a3018"/><path d="M1087,489 Q1088.5,487.5 1090.5,489.5 L1089.5,491 Z" fill="#e0a880"/><path d="M1096.5,486 Q1099,485 1099.5,487.5 L1097,490 Z" fill="#e0a880"/></svg><div class="t" style="top:471.76px;font-size:13.40px;color:#444;left:1106.50px;">Сидорова Анна Евгеньевнам</div><div class="t" style="top:514.75px;font-size:15.65px;color:#222;left:1067.30px;font-weight:bold;">Комментарий</div><div class="b" style="left:1067.30px;top:540.70px;width:701.70px;height:53.30px;border:1px solid #c9c9c9;border-radius:3px;background:#fff;"></div><svg class="b" style="left:1750.00px;top:575.00px;overflow:visible;" width="18.00" height="17.00" viewBox="1750 575 18 17"><path d="M1765.8,579.6 L1755.8,590.4 M1765.8,585.6 L1761.8,590.4" stroke="#3b3b5c" stroke-width="1.3"/></svg><div class="b" style="left:1056.20px;top:635.50px;width:723.60px;height:114.40px;background:#fff;border-radius:6px;box-shadow:0 1px 1px rgba(0,0,0,0.07), 0 -1px 0 rgba(30,40,80,0.04);"></div><div class="b" style="left:1056.20px;top:635.50px;width:723.60px;height:56.20px;background:#f7f8fa;border-radius:6px 6px 0 0;"></div><svg class="b" style="left:1064.50px;top:648.80px;" width="19.00" height="20.00" viewBox="0 0 19 20"><path d="M1,1 L11,1 L17,7 L17,19 L1,19 Z" fill="none" stroke="#8a8d9a" stroke-width="1.5"/><path d="M11,1 L11,7 L17,7" fill="none" stroke="#8a8d9a" stroke-width="1.3"/><path d="M4.5,10 H13.5 M4.5,12.8 H13.5 M4.5,15.6 H13.5" stroke="#8a8d9a" stroke-width="1.3"/></svg><div class="t" style="top:649.87px;font-size:20.00px;color:#7d808f;left:1093.50px;">Связанные документы</div><div class="b" style="left:1067.50px;top:715.40px;width:163.10px;height:23.20px;background:#f4f4f4;border:1px solid #dcdcdc;border-radius:3px;"></div><svg class="b" style="left:1070.00px;top:716.00px;overflow:visible;" width="20.00" height="20.00" viewBox="1070 716 20 20"><g transform="translate(1079.6,726.2) scale(0.78) rotate(-45) translate(-619.2,-137)"><path d="M617,131.5 L617,143 Q617,145.5 619.2,145.5 Q621.4,145.5 621.4,143 L621.4,131 Q621.4,128.8 619.8,128.8 Q618.3,128.8 618.3,131 L618.3,140.5" fill="none" stroke="#444" stroke-width="1.1" transform="translate(0,-0.5)"/></g></svg><div class="t" style="top:720.16px;font-size:13.40px;color:#444;left:1088.00px;">Прикрепить документ</div><div class="b" style="left:1814.10px;top:283.20px;width:723.70px;height:236.80px;background:#fff;border-radius:6px;box-shadow:0 1px 1px rgba(0,0,0,0.07), 0 -1px 0 rgba(30,40,80,0.04);"></div><div class="b" style="left:1814.10px;top:283.20px;width:723.70px;height:56.50px;background:#f7f8fa;border-radius:6px 6px 0 0;"></div><svg class="b" style="left:1822.90px;top:296.30px;" width="19.00" height="20.00" viewBox="0 0 19 20"><path d="M1,1 L11,1 L17,7 L17,19 L1,19 Z" fill="none" stroke="#8a8d9a" stroke-width="1.5"/><path d="M11,1 L11,7 L17,7" fill="none" stroke="#8a8d9a" stroke-width="1.3"/><path d="M4.5,10 H13.5 M4.5,12.8 H13.5 M4.5,15.6 H13.5" stroke="#8a8d9a" stroke-width="1.3"/></svg><div class="t" style="top:297.37px;font-size:20.00px;color:#7d808f;left:1851.90px;">Входящий документ</div><div class="b" style="left:2510.50px;top:303.70px;width:11.50px;height:3.00px;background:#666;border-radius:0.5px;"></div><div class="t" style="top:353.75px;font-size:15.65px;color:#222;left:1825.60px;font-weight:bold;">Номер входящего документа</div><div class="b" style="left:1825.60px;top:379.40px;width:700.90px;height:33.20px;border:1px solid #c9c9c9;border-radius:4px;background:#fff;"></div><div class="t" style="top:432.65px;font-size:15.65px;color:#222;left:1825.60px;font-weight:bold;">Дата входящего документа</div><div class="b" style="left:1825.60px;top:458.20px;width:700.90px;height:33.00px;border:1px solid #c9c9c9;border-radius:4px;background:#fff;"></div><svg class="b" style="left:1839.70px;top:467.50px;" width="18.00" height="13.00" viewBox="0 0 18 13"><g fill="#111"><rect x="4.5" y="0" width="3.6" height="3.6"/><rect x="9" y="0" width="3.6" height="3.6"/><rect x="13.5" y="0" width="3.6" height="3.6"/><rect x="0" y="4.4" width="3.6" height="3.6"/><rect x="4.5" y="4.4" width="3.6" height="3.6"/><rect x="9" y="4.4" width="3.6" height="3.6"/><rect x="13.5" y="4.4" width="3.6" height="3.6"/><rect x="0" y="8.8" width="3.6" height="3.6"/><rect x="4.5" y="8.8" width="3.6" height="3.6"/><rect x="9" y="8.8" width="3.6" height="3.6"/></g></svg><div class="t" style="top:466.68px;font-size:14.55px;color:#222;left:1868.20px;">Выбрать дату</div><div class="b" style="left:298.00px;top:798.00px;width:2239.90px;height:494.00px;background:#fff;border-radius:6px;box-shadow:0 1px 1px rgba(0,0,0,0.07), 0 -1px 0 rgba(30,40,80,0.04);"></div><div class="b" style="left:298.00px;top:798.00px;width:2239.90px;height:57.40px;background:#f7f8fa;border-radius:6px 6px 0 0;"></div><div class="b" style="left:298.00px;top:1228.00px;width:2239.90px;height:64.00px;background:#f6f6f7;border-radius:5px 5px 6px 6px;"></div><svg class="b" style="left:316.00px;top:813.00px;" width="23.00" height="21.00" viewBox="0 0 23 21"><path d="M6.5,1.5 L15.5,1.5" stroke="#8a8d9a" stroke-width="1.8"/><path d="M5,7.5 L6.8,1.5 M17.5,7.5 L15.7,1.5" stroke="#8a8d9a" stroke-width="1.8"/><rect x="0" y="7" width="22.5" height="3.8" rx="1" fill="#8a8d9a"/><path d="M1.5,10.8 L21,10.8 L19.5,20 L3,20 Z" fill="#8a8d9a"/><path d="M6.5,12.5 V18.2 M9.8,12.5 V18.2 M13,12.5 V18.2 M16.3,12.5 V18.2" stroke="#f7f8fa" stroke-width="1.3"/></svg><div class="t" style="top:813.87px;font-size:20.00px;color:#7d808f;left:350.20px;">Товары / услуги</div><div class="b" style="left:509.50px;top:808.30px;width:97.90px;height:31.90px;border:1px solid #dedede;border-radius:4px;background:#fff;"></div><svg class="b" style="left:521.30px;top:818.20px;" width="11.00" height="11.00" viewBox="0 0 11 11"><path d="M5.5,0 V11 M0,5.5 H11" stroke="#222" stroke-width="2.4"/></svg><div class="t" style="top:816.86px;font-size:13.40px;color:#333;left:535.60px;">Добавить</div><div class="b" style="left:610.40px;top:808.30px;width:87.10px;height:31.90px;border:1px solid #dedede;border-radius:4px;background:#fff;"></div><svg class="b" style="left:622.20px;top:816.50px;" width="13.00" height="13.00" viewBox="0 0 13 13"><path d="M6.5,0.5 L11,5 L8,5 L8,9 L5,9 L5,5 L2,5 Z" fill="#222"/><path d="M0.5,8.5 L0.5,12.5 L12.5,12.5 L12.5,8.5" fill="none" stroke="#222" stroke-width="1.6"/><rect x="9.5" y="10.2" width="1.2" height="1" fill="#fff"/></svg><div class="t" style="top:816.86px;font-size:13.40px;color:#333;left:638.80px;">Импорт</div><div class="b" style="left:709.60px;top:808.30px;width:417.20px;height:33.10px;border:1px solid #c9c9c9;border-radius:4px;background:#fff;"></div><div class="b" style="left:1105.00px;top:809.30px;width:1.00px;height:31.10px;background:#c9c9c9;"></div><svg class="b" style="left:1111.00px;top:823.50px;" width="9.00" height="5.00" viewBox="0 0 9 5"><path d="M0,0 L8.4,0 L4.2,4.6 Z" fill="#777"/></svg><svg class="b" style="left:720.90px;top:817.50px;" width="14.00" height="14.00" viewBox="0 0 14 14"><circle cx="5.5" cy="5.5" r="4.4" fill="none" stroke="#999" stroke-width="1.7"/><path d="M8.6,8.6 L12.4,12.4" stroke="#999" stroke-width="2.2" stroke-linecap="round"/></svg><div class="t" style="top:816.76px;font-size:13.40px;color:#999;left:738.00px;">Наименование, артикул, артикул поставщика, штрихкод...</div><div class="b" style="left:309.50px;top:867.60px;width:2216.80px;height:50.90px;background:#fff;"></div><div class="b" style="left:309.50px;top:918.50px;width:2216.80px;height:296.70px;background:#dff0d8;"></div><div class="b" style="left:309.50px;top:867.00px;width:2216.80px;height:1.00px;background:#eeeeee;"></div><div class="b" style="left:309.50px;top:918.00px;width:2216.80px;height:1.00px;background:#ebefe9;"></div><div class="b" style="left:309.50px;top:977.00px;width:2216.80px;height:1.00px;background:#ebefe9;"></div><div class="b" style="left:309.50px;top:1037.00px;width:2216.80px;height:1.00px;background:#ebefe9;"></div><div class="b" style="left:309.50px;top:1096.00px;width:2216.80px;height:1.00px;background:#ebefe9;"></div><div class="b" style="left:309.50px;top:1156.00px;width:2216.80px;height:1.00px;background:#ebefe9;"></div><div class="b" style="left:309.00px;top:867.60px;width:1.00px;height:347.60px;background:#ebefe9;"></div><div class="b" style="left:331.70px;top:867.60px;width:1.00px;height:347.60px;background:#ebefe9;"></div><div class="b" style="left:366.70px;top:867.60px;width:1.00px;height:347.60px;background:#ebefe9;"></div><div class="b" style="left:607.80px;top:867.60px;width:1.00px;height:347.60px;background:#ebefe9;"></div><div class="b" style="left:719.90px;top:867.60px;width:1.00px;height:347.60px;background:#ebefe9;"></div><div class="b" style="left:832.60px;top:867.60px;width:1.00px;height:347.60px;background:#ebefe9;"></div><div class="b" style="left:945.00px;top:867.60px;width:1.00px;height:347.60px;background:#ebefe9;"></div><div class="b" style="left:1211.80px;top:867.60px;width:1.00px;height:347.60px;background:#ebefe9;"></div><div class="b" style="left:1515.00px;top:867.60px;width:1.00px;height:347.60px;background:#ebefe9;"></div><div class="b" style="left:1709.00px;top:867.60px;width:1.00px;height:347.60px;background:#ebefe9;"></div><div class="b" style="left:1873.10px;top:867.60px;width:1.00px;height:347.60px;background:#ebefe9;"></div><div class="b" style="left:1985.00px;top:867.60px;width:1.00px;height:347.60px;background:#ebefe9;"></div><div class="b" style="left:2443.90px;top:867.60px;width:1.00px;height:347.60px;background:#ebefe9;"></div><div class="b" style="left:2525.80px;top:867.60px;width:1.00px;height:347.60px;background:#ebefe9;"></div><div class="t" style="top:895.56px;font-size:13.40px;color:#222;left:316.00px;font-weight:bold;">#</div><svg class="b" style="left:338.50px;top:896.00px;" width="16.00" height="13.00" viewBox="0 0 16 13"><rect x="0.6" y="0.6" width="14.8" height="11.8" fill="none" stroke="#222" stroke-width="1.2"/><path d="M2.5,10.5 L6,6 L8.5,8.5 L10.5,5.5 L13.5,10.5 Z" fill="#222"/><circle cx="4.5" cy="4" r="1.4" fill="#222"/></svg><div class="t" style="top:895.56px;font-size:13.40px;color:#222;left:373.80px;font-weight:bold;">Наименование</div><div class="t" style="top:895.56px;font-size:13.40px;color:#222;left:614.50px;font-weight:bold;">Артикул</div><div class="t" style="top:876.66px;font-size:13.40px;color:#222;left:726.80px;font-weight:bold;">Артикул</div><div class="t" style="top:895.56px;font-size:13.40px;color:#222;left:726.80px;font-weight:bold;">(поставщик)</div><div class="t" style="top:895.56px;font-size:13.40px;color:#222;left:839.50px;font-weight:bold;">Ед.изм.</div><div class="t" style="top:876.66px;font-size:13.40px;color:#222;left:952.00px;font-weight:bold;">Закупочная цена</div><div class="t" style="top:895.56px;font-size:13.40px;color:#222;left:952.00px;font-weight:bold;">(установленная)</div><div class="t" style="top:876.66px;font-size:13.40px;color:#222;left:1219.00px;font-weight:bold;">Закупочная цена</div><div class="t" style="top:895.56px;font-size:13.40px;color:#222;left:1219.00px;font-weight:bold;">(не установленная)</div><div class="t" style="top:895.56px;font-size:13.40px;color:#222;left:1521.50px;font-weight:bold;">Кол-во</div><div class="t" style="top:895.56px;font-size:13.40px;color:#222;left:1715.50px;font-weight:bold;">НДС, руб.</div><div class="t" style="top:895.56px;font-size:13.40px;color:#222;left:1879.50px;font-weight:bold;">НДС, %</div><div class="t" style="top:895.56px;font-size:13.40px;color:#222;left:1992.50px;font-weight:bold;">Сумма</div><div class="b" style="left:2451.00px;top:888.30px;width:22.60px;height:23.50px;background:#f4f4f4;border:1px solid #dcdcdc;border-radius:3px;"></div><svg class="b" style="left:2457.00px;top:893.50px;" width="11.00" height="13.00" viewBox="0 0 11 13"><path d="M0.5,2.6 L10.5,2.6 M3.8,2.6 L3.8,0.8 L7.2,0.8 L7.2,2.6" fill="none" stroke="#dd4b39" stroke-width="1.1"/><path d="M1.6,3.2 L2.3,12.2 L8.7,12.2 L9.4,3.2" fill="none" stroke="#dd4b39" stroke-width="1.1"/><path d="M4,5.2 V10.4 M5.5,5.2 V10.4 M7,5.2 V10.4" stroke="#dd4b39" stroke-width="0.8"/></svg><div class="t" style="top:926.95px;font-size:15.65px;color:#333;left:316.60px;">1</div><div class="b" style="left:339.00px;top:925.30px;width:22.00px;height:22.70px;background:#fff;"></div><svg class="b" style="left:339.00px;top:925.30px;" width="22.00" height="23.00" viewBox="0 0 22 23"><ellipse cx="11" cy="11.5" rx="10.3" ry="9.2" fill="#f2b21e"/><circle cx="15.0" cy="16.2" r="2.0" fill="#5a2a10"/><circle cx="6.5" cy="14.7" r="1.6" fill="#f2b21e"/><circle cx="8.3" cy="11.0" r="1.5" fill="#f2b21e"/><circle cx="6.7" cy="5.6" r="1.1" fill="#e89a12"/><circle cx="7.9" cy="18.6" r="1.1" fill="#e89a12"/><circle cx="16.9" cy="17.9" r="1.4" fill="#9a1018"/><circle cx="15.4" cy="10.6" r="2.3" fill="#f6c830"/><circle cx="9.6" cy="19.2" r="1.4" fill="#d8401a"/><circle cx="8.9" cy="9.0" r="0.8" fill="#9a1018"/><circle cx="16.4" cy="18.0" r="1.1" fill="#e89a12"/><circle cx="16.1" cy="4.5" r="1.2" fill="#9a1018"/><circle cx="13.9" cy="3.5" r="1.4" fill="#f6c830"/><circle cx="1.9" cy="8.6" r="1.8" fill="#5a2a10"/><circle cx="4.1" cy="5.8" r="1.9" fill="#5a2a10"/><circle cx="5.0" cy="8.1" r="1.3" fill="#d8401a"/><circle cx="20.2" cy="8.5" r="1.4" fill="#f2b21e"/><circle cx="14.6" cy="3.9" r="1.8" fill="#c0161c"/><circle cx="11.6" cy="19.4" r="1.9" fill="#9a1018"/><circle cx="11.7" cy="5.3" r="1.6" fill="#f6c830"/><circle cx="10.9" cy="13.6" r="1.7" fill="#c0161c"/><circle cx="15.3" cy="18.0" r="1.9" fill="#f2b21e"/><circle cx="9.3" cy="3.9" r="2.2" fill="#c0161c"/><circle cx="6.5" cy="10.9" r="2.1" fill="#5a2a10"/><circle cx="5.9" cy="9.4" r="0.8" fill="#f2b21e"/><circle cx="2.2" cy="12.7" r="1.0" fill="#f6c830"/><circle cx="12.6" cy="16.8" r="2.3" fill="#9a1018"/><circle cx="9.3" cy="8.4" r="2.4" fill="#5a2a10"/><circle cx="3.9" cy="12.4" r="1.9" fill="#e89a12"/><circle cx="17.4" cy="13.3" r="2.0" fill="#e89a12"/><circle cx="14.6" cy="10.1" r="0.9" fill="#e89a12"/><circle cx="8.8" cy="9.1" r="0.9" fill="#5a2a10"/><circle cx="5.1" cy="15.2" r="1.6" fill="#c0161c"/><circle cx="8.6" cy="5.5" r="1.8" fill="#d8401a"/><circle cx="11.0" cy="14.8" r="1.1" fill="#9a1018"/><circle cx="19.6" cy="15.6" r="1.2" fill="#9a1018"/><circle cx="16.2" cy="5.0" r="1.0" fill="#e89a12"/><circle cx="17.1" cy="11.4" r="1.2" fill="#c0161c"/><circle cx="11.5" cy="9.9" r="0.8" fill="#d8401a"/><circle cx="6.6" cy="10.0" r="0.8" fill="#f2b21e"/><circle cx="12.5" cy="18.4" r="2.0" fill="#f2b21e"/><circle cx="16.4" cy="5.2" r="1.4" fill="#5a2a10"/><circle cx="12.4" cy="10.5" r="2.0" fill="#f2b21e"/><circle cx="18.6" cy="12.5" r="1.4" fill="#d8401a"/><circle cx="7.3" cy="10.3" r="1.9" fill="#5a2a10"/><circle cx="10.2" cy="4.2" r="1.6" fill="#e89a12"/><circle cx="4.9" cy="16.6" r="1.1" fill="#e89a12"/><circle cx="5.0" cy="7.6" r="2.3" fill="#f2b21e"/><circle cx="5.5" cy="6.6" r="1.0" fill="#f6c830"/><circle cx="15.3" cy="6.6" r="1.8" fill="#e89a12"/><circle cx="15.9" cy="6.5" r="1.2" fill="#9a1018"/><circle cx="13.1" cy="6.1" r="1.4" fill="#f2b21e"/><circle cx="19.4" cy="15.0" r="1.5" fill="#f6c830"/><circle cx="12.8" cy="13.8" r="0.9" fill="#5a2a10"/><circle cx="7.6" cy="5.7" r="2.1" fill="#e89a12"/><circle cx="16.4" cy="17.4" r="1.7" fill="#e89a12"/><circle cx="16.4" cy="9.5" r="1.7" fill="#5a2a10"/><circle cx="13.4" cy="9.7" r="2.1" fill="#d8401a"/><circle cx="7.4" cy="17.9" r="2.2" fill="#9a1018"/><circle cx="15.5" cy="9.1" r="2.0" fill="#d8401a"/><circle cx="15.2" cy="9.7" r="2.3" fill="#e89a12"/><circle cx="3.8" cy="11.2" r="1.0" fill="#5a2a10"/><circle cx="17.3" cy="6.6" r="1.4" fill="#9a1018"/><circle cx="11.6" cy="13.3" r="2.2" fill="#d8401a"/><circle cx="6.1" cy="11.3" r="1.8" fill="#f6c830"/><circle cx="19.3" cy="9.7" r="1.9" fill="#f2b21e"/><circle cx="18.5" cy="8.5" r="1.5" fill="#5a2a10"/><circle cx="15.6" cy="11.8" r="2.2" fill="#f2b21e"/><circle cx="8.8" cy="9.5" r="1.3" fill="#d8401a"/><circle cx="7.9" cy="3.5" r="1.1" fill="#f2b21e"/><circle cx="15.2" cy="17.1" r="1.8" fill="#e89a12"/></svg><div class="b" style="left:373.20px;top:926.80px;width:21.30px;height:19.90px;background:#ececec;border-radius:3px;"></div><div class="t" style="top:930.92px;font-size:12.50px;color:#111;left:383.90px;width:0;display:flex;justify-content:center;font-weight:bold;">т</div><div class="t" style="top:927.62px;font-size:15.45px;color:#3c8dbc;left:399.60px;">Букет № 1</div><div class="b" style="left:613.90px;top:924.20px;width:39.40px;height:20.40px;background:#ececec;border-radius:3px;"></div><div class="t" style="top:928.32px;font-size:12.50px;color:#111;left:633.60px;width:0;display:flex;justify-content:center;font-weight:bold;">Т64</div><div class="b" style="left:839.10px;top:926.00px;width:57.40px;height:22.00px;background:#ececec;border-radius:3px;"></div><div class="t" style="top:930.62px;font-size:12.50px;color:#111;left:867.80px;width:0;display:flex;justify-content:center;font-weight:bold;">компл</div><div class="t" style="top:926.96px;font-size:15.40px;color:#333;left:953.20px;">1 250.00 <svg class="rub" viewBox="0 0 620 716" width="0.62em" height="0.716em"><path d="M160,40 V716 M160,40 H370 Q575,40 575,222 Q575,372 370,372 H40 M40,540 H470" fill="none" stroke="currentColor" stroke-width="80"/></svg></div><div class="b" style="left:1219.30px;top:924.40px;width:123.40px;height:24.40px;background:#fff;border:1px solid #c6c6c6;border-radius:2px;"></div><div class="t" style="top:930.26px;font-size:13.40px;color:#555;right:1214.40px;">1 250,00 <svg class="rub" viewBox="0 0 620 716" width="0.62em" height="0.716em"><path d="M160,40 V716 M160,40 H370 Q575,40 575,222 Q575,372 370,372 H40 M40,540 H470" fill="none" stroke="currentColor" stroke-width="80"/></svg></div><div class="t" style="top:952.06px;font-size:15.40px;color:#8a8a8a;right:1207.80px;">+0,00 %</div><div class="b" style="left:1521.20px;top:924.20px;width:78.60px;height:24.50px;background:#fff;border:1px solid #c6c6c6;"></div><div class="t" style="top:930.56px;font-size:13.40px;color:#555;left:1561.40px;width:0;display:flex;justify-content:center;">10</div><div class="t" style="top:926.85px;font-size:15.65px;color:#333;left:1715.90px;">0.00 <svg class="rub" viewBox="0 0 620 716" width="0.62em" height="0.716em"><path d="M160,40 V716 M160,40 H370 Q575,40 575,222 Q575,372 370,372 H40 M40,540 H470" fill="none" stroke="currentColor" stroke-width="80"/></svg></div><div class="b" style="left:1879.00px;top:924.40px;width:100.20px;height:33.50px;background:#fff;border:1px solid #d4d4d4;border-radius:4px;"></div><div class="t" style="top:933.66px;font-size:13.40px;color:#555;left:1891.40px;">20%</div><svg class="b" style="left:1955.80px;top:939.30px;" width="9.00" height="5.00" viewBox="0 0 9 5"><path d="M0,0 L8.4,0 L4.2,4.6 Z" fill="#888"/></svg><div class="b" style="left:1992.10px;top:924.40px;width:201.60px;height:24.30px;background:#fff;border:1px solid #c6c6c6;"></div><div class="t" style="top:929.91px;font-size:13.10px;color:#3a3a3a;right:363.20px;font-weight:bold;">12 500,00 <svg class="rub" viewBox="0 0 620 716" width="0.62em" height="0.716em"><path d="M160,65 V716 M160,65 H370 Q575,65 575,222 Q575,347 370,347 H40 M40,540 H470" fill="none" stroke="currentColor" stroke-width="130"/></svg></div><div class="b" style="left:2451.50px;top:924.60px;width:22.10px;height:23.90px;background:#f4f4f4;border:1px solid #dcdcdc;border-radius:3px;"></div><svg class="b" style="left:2457.50px;top:931.50px;" width="10.00" height="10.00" viewBox="0 0 10 10"><path d="M1.6,1.6 L8.4,8.4 M8.4,1.6 L1.6,8.4" stroke="#333" stroke-width="2.5"/></svg><div class="t" style="top:986.43px;font-size:15.65px;color:#333;left:316.60px;">2</div><div class="b" style="left:339.00px;top:984.78px;width:22.00px;height:22.70px;background:#fff;"></div><svg class="b" style="left:339.00px;top:984.78px;" width="22.00" height="23.00" viewBox="0 0 22 23"><ellipse cx="10.5" cy="10.5" rx="9.3" ry="8.5" fill="#e84a90"/><circle cx="7.1" cy="8.8" r="2.3" fill="#f6d030"/><circle cx="3.5" cy="11.8" r="1.1" fill="#f08a20"/><circle cx="15.8" cy="7.7" r="2.1" fill="#f6d030"/><circle cx="12.8" cy="10.1" r="1.1" fill="#e84a90"/><circle cx="4.4" cy="12.5" r="1.1" fill="#f6b040"/><circle cx="7.3" cy="16.2" r="1.4" fill="#f08a20"/><circle cx="16.1" cy="12.6" r="1.1" fill="#50a040"/><circle cx="13.7" cy="4.5" r="1.9" fill="#f6d030"/><circle cx="6.2" cy="13.6" r="1.5" fill="#e03a30"/><circle cx="10.3" cy="5.3" r="2.2" fill="#f08a20"/><circle cx="5.4" cy="9.5" r="0.8" fill="#50a040"/><circle cx="7.6" cy="13.7" r="2.1" fill="#e84a90"/><circle cx="6.3" cy="12.3" r="2.0" fill="#e03a30"/><circle cx="7.5" cy="4.2" r="1.4" fill="#50a040"/><circle cx="7.2" cy="9.1" r="2.2" fill="#d02070"/><circle cx="7.4" cy="17.5" r="1.9" fill="#50a040"/><circle cx="16.5" cy="4.9" r="0.9" fill="#d02070"/><circle cx="5.6" cy="17.0" r="2.2" fill="#f6b040"/><circle cx="13.5" cy="4.4" r="1.8" fill="#d02070"/><circle cx="13.4" cy="3.8" r="1.0" fill="#f08a20"/><circle cx="14.0" cy="8.8" r="2.3" fill="#d02070"/><circle cx="2.6" cy="13.0" r="1.0" fill="#f08a20"/><circle cx="14.3" cy="7.4" r="0.9" fill="#d02070"/><circle cx="2.1" cy="8.0" r="1.5" fill="#f08a20"/><circle cx="9.1" cy="17.7" r="0.9" fill="#f08a20"/><circle cx="10.5" cy="14.2" r="1.0" fill="#f6b040"/><circle cx="14.6" cy="7.8" r="1.0" fill="#50a040"/><circle cx="14.2" cy="10.0" r="0.8" fill="#e03a30"/><circle cx="14.2" cy="6.2" r="1.7" fill="#f6b040"/><circle cx="6.4" cy="16.6" r="1.6" fill="#f08a20"/><circle cx="4.4" cy="8.6" r="1.3" fill="#f08a20"/><circle cx="8.8" cy="17.0" r="2.2" fill="#e03a30"/><circle cx="5.6" cy="5.2" r="1.6" fill="#f08a20"/><circle cx="12.3" cy="12.7" r="1.3" fill="#f6d030"/><circle cx="18.6" cy="11.6" r="1.1" fill="#50a040"/><circle cx="8.5" cy="6.0" r="1.9" fill="#d02070"/><circle cx="12.0" cy="15.8" r="1.7" fill="#f6d030"/><circle cx="7.1" cy="4.3" r="1.2" fill="#e03a30"/><circle cx="13.0" cy="18.1" r="2.0" fill="#f08a20"/><circle cx="18.9" cy="13.0" r="2.0" fill="#e03a30"/><circle cx="8.6" cy="11.2" r="1.7" fill="#f08a20"/><circle cx="17.9" cy="8.3" r="1.5" fill="#d02070"/><circle cx="12.4" cy="9.6" r="1.5" fill="#e03a30"/><circle cx="6.6" cy="4.4" r="2.3" fill="#e03a30"/><circle cx="10.4" cy="3.0" r="0.9" fill="#50a040"/><circle cx="15.2" cy="5.9" r="1.0" fill="#e84a90"/><circle cx="18.3" cy="9.4" r="1.3" fill="#50a040"/><circle cx="15.9" cy="12.9" r="2.4" fill="#e84a90"/><circle cx="10.1" cy="14.4" r="1.1" fill="#f6b040"/><circle cx="1.9" cy="8.9" r="2.0" fill="#50a040"/><circle cx="14.6" cy="16.3" r="1.7" fill="#50a040"/><circle cx="10.2" cy="7.0" r="1.0" fill="#f08a20"/><circle cx="17.3" cy="5.7" r="2.1" fill="#50a040"/><circle cx="6.3" cy="10.2" r="1.7" fill="#e84a90"/><circle cx="6.3" cy="17.3" r="2.2" fill="#d02070"/><circle cx="6.0" cy="4.0" r="1.0" fill="#e84a90"/><circle cx="4.2" cy="12.4" r="2.2" fill="#d02070"/><circle cx="3.5" cy="5.7" r="1.4" fill="#f08a20"/><circle cx="9.6" cy="7.9" r="1.9" fill="#e84a90"/><circle cx="15.3" cy="10.1" r="1.2" fill="#50a040"/><circle cx="13.9" cy="4.7" r="1.4" fill="#f6b040"/><circle cx="15.6" cy="4.3" r="2.0" fill="#50a040"/><circle cx="9.7" cy="11.8" r="1.3" fill="#f08a20"/><circle cx="6.6" cy="11.2" r="1.0" fill="#f08a20"/><circle cx="4.3" cy="10.7" r="1.1" fill="#f6d030"/><circle cx="10.9" cy="3.5" r="1.1" fill="#f6b040"/><circle cx="15.3" cy="11.6" r="1.2" fill="#f6b040"/><circle cx="13.0" cy="8.7" r="1.7" fill="#50a040"/><circle cx="9.0" cy="2.7" r="1.8" fill="#f6b040"/><circle cx="12.7" cy="3.0" r="1.8" fill="#f6d030"/></svg><div class="b" style="left:373.20px;top:986.28px;width:21.30px;height:19.90px;background:#ececec;border-radius:3px;"></div><div class="t" style="top:990.40px;font-size:12.50px;color:#111;left:383.90px;width:0;display:flex;justify-content:center;font-weight:bold;">т</div><div class="t" style="top:987.10px;font-size:15.45px;color:#3c8dbc;left:399.60px;">Букет № 2</div><div class="b" style="left:613.90px;top:983.68px;width:39.40px;height:20.40px;background:#ececec;border-radius:3px;"></div><div class="t" style="top:987.80px;font-size:12.50px;color:#111;left:633.60px;width:0;display:flex;justify-content:center;font-weight:bold;">Т65</div><div class="b" style="left:839.10px;top:985.48px;width:57.40px;height:22.00px;background:#ececec;border-radius:3px;"></div><div class="t" style="top:990.10px;font-size:12.50px;color:#111;left:867.80px;width:0;display:flex;justify-content:center;font-weight:bold;">компл</div><div class="t" style="top:986.44px;font-size:15.40px;color:#333;left:953.20px;">1 900.00 <svg class="rub" viewBox="0 0 620 716" width="0.62em" height="0.716em"><path d="M160,40 V716 M160,40 H370 Q575,40 575,222 Q575,372 370,372 H40 M40,540 H470" fill="none" stroke="currentColor" stroke-width="80"/></svg></div><div class="b" style="left:1219.30px;top:983.88px;width:123.40px;height:24.40px;background:#fff;border:1px solid #c6c6c6;border-radius:2px;"></div><div class="t" style="top:989.74px;font-size:13.40px;color:#555;right:1214.40px;">1 900,00 <svg class="rub" viewBox="0 0 620 716" width="0.62em" height="0.716em"><path d="M160,40 V716 M160,40 H370 Q575,40 575,222 Q575,372 370,372 H40 M40,540 H470" fill="none" stroke="currentColor" stroke-width="80"/></svg></div><div class="t" style="top:1011.54px;font-size:15.40px;color:#8a8a8a;right:1207.80px;">+0,00 %</div><div class="b" style="left:1521.20px;top:983.68px;width:78.60px;height:24.50px;background:#fff;border:1px solid #c6c6c6;"></div><div class="t" style="top:990.04px;font-size:13.40px;color:#555;left:1561.40px;width:0;display:flex;justify-content:center;">10</div><div class="t" style="top:986.33px;font-size:15.65px;color:#333;left:1715.90px;">0.00 <svg class="rub" viewBox="0 0 620 716" width="0.62em" height="0.716em"><path d="M160,40 V716 M160,40 H370 Q575,40 575,222 Q575,372 370,372 H40 M40,540 H470" fill="none" stroke="currentColor" stroke-width="80"/></svg></div><div class="b" style="left:1879.00px;top:983.88px;width:100.20px;height:33.50px;background:#fff;border:1px solid #d4d4d4;border-radius:4px;"></div><div class="t" style="top:993.14px;font-size:13.40px;color:#555;left:1891.40px;">20%</div><svg class="b" style="left:1955.80px;top:998.78px;" width="9.00" height="5.00" viewBox="0 0 9 5"><path d="M0,0 L8.4,0 L4.2,4.6 Z" fill="#888"/></svg><div class="b" style="left:1992.10px;top:983.88px;width:201.60px;height:24.30px;background:#fff;border:1px solid #c6c6c6;"></div><div class="t" style="top:989.39px;font-size:13.10px;color:#3a3a3a;right:363.20px;font-weight:bold;">19 000,00 <svg class="rub" viewBox="0 0 620 716" width="0.62em" height="0.716em"><path d="M160,65 V716 M160,65 H370 Q575,65 575,222 Q575,347 370,347 H40 M40,540 H470" fill="none" stroke="currentColor" stroke-width="130"/></svg></div><div class="b" style="left:2451.50px;top:984.08px;width:22.10px;height:23.90px;background:#f4f4f4;border:1px solid #dcdcdc;border-radius:3px;"></div><svg class="b" style="left:2457.50px;top:990.98px;" width="10.00" height="10.00" viewBox="0 0 10 10"><path d="M1.6,1.6 L8.4,8.4 M8.4,1.6 L1.6,8.4" stroke="#333" stroke-width="2.5"/></svg><div class="t" style="top:1045.91px;font-size:15.65px;color:#333;left:316.60px;">3</div><div class="b" style="left:339.00px;top:1044.26px;width:22.00px;height:22.70px;background:#fff;"></div><svg class="b" style="left:339.00px;top:1044.26px;" width="22.00" height="23.00" viewBox="0 0 22 23"><ellipse cx="11" cy="11.2" rx="8.5" ry="8.2" fill="#8a1a28"/><circle cx="14.8" cy="16.1" r="1.1" fill="#501018"/><circle cx="9.2" cy="8.4" r="1.3" fill="#d8d0c8"/><circle cx="9.5" cy="10.5" r="1.6" fill="#5a7a40"/><circle cx="10.8" cy="3.9" r="1.1" fill="#e0b0b0"/><circle cx="8.2" cy="13.8" r="1.0" fill="#e0b0b0"/><circle cx="14.3" cy="12.3" r="1.7" fill="#5a7a40"/><circle cx="14.6" cy="5.6" r="1.6" fill="#d8d0c8"/><circle cx="6.4" cy="6.9" r="1.9" fill="#c02a3a"/><circle cx="5.4" cy="6.6" r="1.4" fill="#c02a3a"/><circle cx="4.0" cy="10.8" r="1.5" fill="#d8d0c8"/><circle cx="15.8" cy="16.4" r="1.4" fill="#8a1a28"/><circle cx="5.6" cy="7.9" r="1.5" fill="#5a7a40"/><circle cx="5.0" cy="6.1" r="2.0" fill="#f0f0e8"/><circle cx="13.9" cy="5.7" r="1.6" fill="#5a7a40"/><circle cx="5.0" cy="13.2" r="2.2" fill="#501018"/><circle cx="12.1" cy="14.9" r="1.1" fill="#5a7a40"/><circle cx="16.5" cy="8.1" r="1.7" fill="#f0f0e8"/><circle cx="6.0" cy="10.4" r="2.3" fill="#e0b0b0"/><circle cx="12.0" cy="13.0" r="2.2" fill="#d8d0c8"/><circle cx="10.2" cy="6.2" r="2.2" fill="#c02a3a"/><circle cx="12.2" cy="16.3" r="1.9" fill="#c02a3a"/><circle cx="8.0" cy="10.9" r="1.8" fill="#5a7a40"/><circle cx="11.3" cy="13.4" r="1.4" fill="#c02a3a"/><circle cx="16.3" cy="15.8" r="0.8" fill="#f0f0e8"/><circle cx="8.2" cy="17.3" r="1.5" fill="#c02a3a"/><circle cx="4.9" cy="13.9" r="2.1" fill="#501018"/><circle cx="12.7" cy="16.3" r="2.1" fill="#e0b0b0"/><circle cx="12.6" cy="5.5" r="1.1" fill="#501018"/><circle cx="11.4" cy="13.5" r="1.1" fill="#e0b0b0"/><circle cx="9.5" cy="5.0" r="2.0" fill="#501018"/><circle cx="10.3" cy="11.3" r="1.2" fill="#c02a3a"/><circle cx="13.1" cy="15.9" r="2.3" fill="#c02a3a"/><circle cx="8.8" cy="3.9" r="1.8" fill="#d8d0c8"/><circle cx="13.4" cy="13.2" r="1.9" fill="#c02a3a"/><circle cx="9.9" cy="4.0" r="0.9" fill="#c02a3a"/><circle cx="7.2" cy="4.7" r="1.0" fill="#501018"/><circle cx="6.5" cy="8.0" r="2.2" fill="#e0b0b0"/><circle cx="9.4" cy="13.6" r="2.3" fill="#d8d0c8"/><circle cx="8.0" cy="4.9" r="1.9" fill="#f0f0e8"/><circle cx="7.3" cy="9.2" r="1.7" fill="#d8d0c8"/><circle cx="14.6" cy="10.9" r="0.9" fill="#5a7a40"/><circle cx="11.2" cy="3.6" r="0.8" fill="#5a7a40"/><circle cx="4.9" cy="11.9" r="1.1" fill="#f0f0e8"/><circle cx="9.9" cy="18.5" r="2.2" fill="#501018"/><circle cx="12.7" cy="14.8" r="2.2" fill="#e0b0b0"/><circle cx="10.1" cy="8.8" r="2.0" fill="#501018"/><circle cx="6.8" cy="5.0" r="2.0" fill="#501018"/><circle cx="14.5" cy="18.1" r="1.2" fill="#d8d0c8"/><circle cx="14.1" cy="14.6" r="1.6" fill="#f0f0e8"/><circle cx="10.6" cy="16.4" r="1.1" fill="#501018"/><circle cx="11.7" cy="13.7" r="1.9" fill="#f0f0e8"/><circle cx="7.6" cy="15.9" r="2.0" fill="#5a7a40"/><circle cx="17.3" cy="13.4" r="2.4" fill="#8a1a28"/><circle cx="12.2" cy="10.8" r="1.0" fill="#f0f0e8"/><circle cx="3.2" cy="9.8" r="0.9" fill="#d8d0c8"/><circle cx="17.6" cy="9.8" r="0.9" fill="#c02a3a"/><circle cx="6.3" cy="12.7" r="2.1" fill="#501018"/><circle cx="11.6" cy="15.6" r="2.1" fill="#501018"/><circle cx="17.5" cy="9.5" r="2.3" fill="#c02a3a"/><circle cx="14.6" cy="6.1" r="1.3" fill="#8a1a28"/><circle cx="15.5" cy="15.0" r="2.1" fill="#e0b0b0"/><circle cx="10.4" cy="17.9" r="2.3" fill="#c02a3a"/><circle cx="17.0" cy="14.4" r="1.7" fill="#c02a3a"/><circle cx="7.9" cy="4.8" r="2.1" fill="#501018"/><circle cx="14.7" cy="11.3" r="2.1" fill="#5a7a40"/><circle cx="17.0" cy="8.1" r="1.2" fill="#5a7a40"/><circle cx="8.8" cy="4.9" r="1.6" fill="#5a7a40"/><circle cx="16.9" cy="11.6" r="1.5" fill="#f0f0e8"/><circle cx="3.2" cy="11.0" r="1.2" fill="#d8d0c8"/><circle cx="15.2" cy="14.0" r="1.9" fill="#8a1a28"/></svg><div class="b" style="left:373.20px;top:1045.76px;width:21.30px;height:19.90px;background:#ececec;border-radius:3px;"></div><div class="t" style="top:1049.88px;font-size:12.50px;color:#111;left:383.90px;width:0;display:flex;justify-content:center;font-weight:bold;">т</div><div class="t" style="top:1046.58px;font-size:15.45px;color:#3c8dbc;left:399.60px;">Букет № 3</div><div class="b" style="left:613.90px;top:1043.16px;width:39.40px;height:20.40px;background:#ececec;border-radius:3px;"></div><div class="t" style="top:1047.28px;font-size:12.50px;color:#111;left:633.60px;width:0;display:flex;justify-content:center;font-weight:bold;">Т66</div><div class="b" style="left:839.10px;top:1044.96px;width:57.40px;height:22.00px;background:#ececec;border-radius:3px;"></div><div class="t" style="top:1049.58px;font-size:12.50px;color:#111;left:867.80px;width:0;display:flex;justify-content:center;font-weight:bold;">компл</div><div class="t" style="top:1045.92px;font-size:15.40px;color:#333;left:953.20px;">1 950.00 <svg class="rub" viewBox="0 0 620 716" width="0.62em" height="0.716em"><path d="M160,40 V716 M160,40 H370 Q575,40 575,222 Q575,372 370,372 H40 M40,540 H470" fill="none" stroke="currentColor" stroke-width="80"/></svg></div><div class="b" style="left:1219.30px;top:1043.36px;width:123.40px;height:24.40px;background:#fff;border:1px solid #c6c6c6;border-radius:2px;"></div><div class="t" style="top:1049.22px;font-size:13.40px;color:#555;right:1214.40px;">1 950,00 <svg class="rub" viewBox="0 0 620 716" width="0.62em" height="0.716em"><path d="M160,40 V716 M160,40 H370 Q575,40 575,222 Q575,372 370,372 H40 M40,540 H470" fill="none" stroke="currentColor" stroke-width="80"/></svg></div><div class="t" style="top:1071.02px;font-size:15.40px;color:#8a8a8a;right:1207.80px;">+0,00 %</div><div class="b" style="left:1521.20px;top:1043.16px;width:78.60px;height:24.50px;background:#fff;border:1px solid #c6c6c6;"></div><div class="t" style="top:1049.52px;font-size:13.40px;color:#555;left:1561.40px;width:0;display:flex;justify-content:center;">10</div><div class="t" style="top:1045.81px;font-size:15.65px;color:#333;left:1715.90px;">0.00 <svg class="rub" viewBox="0 0 620 716" width="0.62em" height="0.716em"><path d="M160,40 V716 M160,40 H370 Q575,40 575,222 Q575,372 370,372 H40 M40,540 H470" fill="none" stroke="currentColor" stroke-width="80"/></svg></div><div class="b" style="left:1879.00px;top:1043.36px;width:100.20px;height:33.50px;background:#fff;border:1px solid #d4d4d4;border-radius:4px;"></div><div class="t" style="top:1052.62px;font-size:13.40px;color:#555;left:1891.40px;">20%</div><svg class="b" style="left:1955.80px;top:1058.26px;" width="9.00" height="5.00" viewBox="0 0 9 5"><path d="M0,0 L8.4,0 L4.2,4.6 Z" fill="#888"/></svg><div class="b" style="left:1992.10px;top:1043.36px;width:201.60px;height:24.30px;background:#fff;border:1px solid #c6c6c6;"></div><div class="t" style="top:1048.87px;font-size:13.10px;color:#3a3a3a;right:363.20px;font-weight:bold;">19 500,00 <svg class="rub" viewBox="0 0 620 716" width="0.62em" height="0.716em"><path d="M160,65 V716 M160,65 H370 Q575,65 575,222 Q575,347 370,347 H40 M40,540 H470" fill="none" stroke="currentColor" stroke-width="130"/></svg></div><div class="b" style="left:2451.50px;top:1043.56px;width:22.10px;height:23.90px;background:#f4f4f4;border:1px solid #dcdcdc;border-radius:3px;"></div><svg class="b" style="left:2457.50px;top:1050.46px;" width="10.00" height="10.00" viewBox="0 0 10 10"><path d="M1.6,1.6 L8.4,8.4 M8.4,1.6 L1.6,8.4" stroke="#333" stroke-width="2.5"/></svg><div class="t" style="top:1105.39px;font-size:15.65px;color:#333;left:316.60px;">4</div><div class="b" style="left:339.00px;top:1103.74px;width:22.00px;height:22.70px;background:#fff;"></div><svg class="b" style="left:339.00px;top:1103.74px;" width="22.00" height="23.00" viewBox="0 0 22 23"><ellipse cx="11" cy="10.5" rx="9" ry="9" fill="#f4f4ea"/><circle cx="16.7" cy="9.7" r="2.0" fill="#ffffff"/><circle cx="14.0" cy="4.0" r="2.3" fill="#ffffff"/><circle cx="14.8" cy="14.2" r="2.2" fill="#c8d8a8"/><circle cx="8.3" cy="5.2" r="1.0" fill="#f0e8a0"/><circle cx="11.6" cy="9.3" r="1.2" fill="#f4f4ea"/><circle cx="8.6" cy="4.3" r="1.3" fill="#ffffff"/><circle cx="4.8" cy="14.4" r="2.0" fill="#6a8a40"/><circle cx="12.0" cy="17.4" r="2.0" fill="#f0e8a0"/><circle cx="11.0" cy="15.7" r="1.7" fill="#ffffff"/><circle cx="6.7" cy="6.5" r="1.2" fill="#9ab870"/><circle cx="17.2" cy="6.4" r="1.6" fill="#c8d8a8"/><circle cx="15.9" cy="6.7" r="1.9" fill="#9ab870"/><circle cx="18.5" cy="12.5" r="1.0" fill="#f0e8a0"/><circle cx="11.0" cy="13.2" r="2.3" fill="#f4f4ea"/><circle cx="14.7" cy="4.7" r="2.1" fill="#9ab870"/><circle cx="2.5" cy="11.3" r="2.4" fill="#f0e8a0"/><circle cx="11.3" cy="7.9" r="1.4" fill="#f4f4ea"/><circle cx="4.7" cy="8.5" r="1.4" fill="#c8d8a8"/><circle cx="10.4" cy="6.2" r="2.2" fill="#e8ecd8"/><circle cx="9.3" cy="11.1" r="1.8" fill="#c8d8a8"/><circle cx="15.2" cy="10.8" r="1.2" fill="#e8ecd8"/><circle cx="11.7" cy="15.8" r="1.7" fill="#ffffff"/><circle cx="10.3" cy="9.2" r="1.5" fill="#f4f4ea"/><circle cx="4.4" cy="8.1" r="1.3" fill="#ffffff"/><circle cx="8.5" cy="7.2" r="1.0" fill="#6a8a40"/><circle cx="8.0" cy="18.1" r="1.1" fill="#9ab870"/><circle cx="4.5" cy="9.3" r="1.9" fill="#ffffff"/><circle cx="16.7" cy="4.5" r="1.9" fill="#9ab870"/><circle cx="15.6" cy="15.6" r="2.0" fill="#c8d8a8"/><circle cx="18.9" cy="11.9" r="1.8" fill="#e8ecd8"/><circle cx="4.4" cy="14.6" r="2.0" fill="#c8d8a8"/><circle cx="9.4" cy="17.6" r="2.0" fill="#9ab870"/><circle cx="7.2" cy="12.8" r="0.9" fill="#c8d8a8"/><circle cx="6.9" cy="7.8" r="2.1" fill="#6a8a40"/><circle cx="14.7" cy="15.0" r="1.5" fill="#ffffff"/><circle cx="4.6" cy="7.7" r="2.0" fill="#f0e8a0"/><circle cx="17.0" cy="10.8" r="0.8" fill="#9ab870"/><circle cx="14.8" cy="15.9" r="1.9" fill="#6a8a40"/><circle cx="13.8" cy="7.1" r="0.8" fill="#f0e8a0"/><circle cx="12.3" cy="4.3" r="1.0" fill="#f4f4ea"/><circle cx="13.1" cy="13.0" r="1.4" fill="#c8d8a8"/><circle cx="12.6" cy="3.3" r="2.1" fill="#9ab870"/><circle cx="9.5" cy="6.5" r="2.4" fill="#f4f4ea"/><circle cx="13.0" cy="3.3" r="1.7" fill="#6a8a40"/><circle cx="9.4" cy="15.7" r="2.3" fill="#f0e8a0"/><circle cx="3.7" cy="9.8" r="2.4" fill="#9ab870"/><circle cx="14.6" cy="13.4" r="1.8" fill="#ffffff"/><circle cx="8.5" cy="10.3" r="1.6" fill="#6a8a40"/><circle cx="11.2" cy="8.6" r="1.2" fill="#f4f4ea"/><circle cx="13.4" cy="13.2" r="2.0" fill="#f4f4ea"/><circle cx="7.2" cy="7.5" r="1.4" fill="#6a8a40"/><circle cx="9.6" cy="13.2" r="0.9" fill="#9ab870"/><circle cx="11.7" cy="2.8" r="2.3" fill="#e8ecd8"/><circle cx="6.5" cy="12.3" r="1.3" fill="#ffffff"/><circle cx="10.0" cy="16.8" r="2.2" fill="#9ab870"/><circle cx="8.7" cy="6.4" r="2.3" fill="#6a8a40"/><circle cx="7.3" cy="16.9" r="1.3" fill="#6a8a40"/><circle cx="8.9" cy="4.0" r="0.9" fill="#e8ecd8"/><circle cx="7.6" cy="10.7" r="0.8" fill="#9ab870"/><circle cx="5.9" cy="4.7" r="2.0" fill="#ffffff"/><circle cx="6.5" cy="3.6" r="1.5" fill="#9ab870"/><circle cx="6.6" cy="16.3" r="1.9" fill="#f0e8a0"/><circle cx="10.0" cy="9.0" r="0.8" fill="#6a8a40"/><circle cx="14.8" cy="10.4" r="1.3" fill="#9ab870"/><circle cx="10.4" cy="18.5" r="2.0" fill="#c8d8a8"/><circle cx="7.2" cy="7.1" r="1.0" fill="#6a8a40"/><circle cx="8.3" cy="18.4" r="1.1" fill="#9ab870"/><circle cx="4.6" cy="6.8" r="2.4" fill="#ffffff"/><circle cx="4.4" cy="6.2" r="1.5" fill="#f4f4ea"/><circle cx="11.8" cy="5.9" r="1.2" fill="#f0e8a0"/></svg><div class="b" style="left:373.20px;top:1105.24px;width:21.30px;height:19.90px;background:#ececec;border-radius:3px;"></div><div class="t" style="top:1109.36px;font-size:12.50px;color:#111;left:383.90px;width:0;display:flex;justify-content:center;font-weight:bold;">т</div><div class="t" style="top:1106.06px;font-size:15.45px;color:#3c8dbc;left:399.60px;">Букет № 4</div><div class="b" style="left:613.90px;top:1102.64px;width:39.40px;height:20.40px;background:#ececec;border-radius:3px;"></div><div class="t" style="top:1106.76px;font-size:12.50px;color:#111;left:633.60px;width:0;display:flex;justify-content:center;font-weight:bold;">Т67</div><div class="b" style="left:839.10px;top:1104.44px;width:57.40px;height:22.00px;background:#ececec;border-radius:3px;"></div><div class="t" style="top:1109.06px;font-size:12.50px;color:#111;left:867.80px;width:0;display:flex;justify-content:center;font-weight:bold;">компл</div><div class="t" style="top:1105.40px;font-size:15.40px;color:#333;left:953.20px;">1 350.00 <svg class="rub" viewBox="0 0 620 716" width="0.62em" height="0.716em"><path d="M160,40 V716 M160,40 H370 Q575,40 575,222 Q575,372 370,372 H40 M40,540 H470" fill="none" stroke="currentColor" stroke-width="80"/></svg></div><div class="b" style="left:1219.30px;top:1102.84px;width:123.40px;height:24.40px;background:#fff;border:1px solid #c6c6c6;border-radius:2px;"></div><div class="t" style="top:1108.70px;font-size:13.40px;color:#555;right:1214.40px;">1 350,00 <svg class="rub" viewBox="0 0 620 716" width="0.62em" height="0.716em"><path d="M160,40 V716 M160,40 H370 Q575,40 575,222 Q575,372 370,372 H40 M40,540 H470" fill="none" stroke="currentColor" stroke-width="80"/></svg></div><div class="t" style="top:1130.50px;font-size:15.40px;color:#8a8a8a;right:1207.80px;">+0,00 %</div><div class="b" style="left:1521.20px;top:1102.64px;width:78.60px;height:24.50px;background:#fff;border:1px solid #c6c6c6;"></div><div class="t" style="top:1109.00px;font-size:13.40px;color:#555;left:1561.40px;width:0;display:flex;justify-content:center;">10</div><div class="t" style="top:1105.29px;font-size:15.65px;color:#333;left:1715.90px;">0.00 <svg class="rub" viewBox="0 0 620 716" width="0.62em" height="0.716em"><path d="M160,40 V716 M160,40 H370 Q575,40 575,222 Q575,372 370,372 H40 M40,540 H470" fill="none" stroke="currentColor" stroke-width="80"/></svg></div><div class="b" style="left:1879.00px;top:1102.84px;width:100.20px;height:33.50px;background:#fff;border:1px solid #d4d4d4;border-radius:4px;"></div><div class="t" style="top:1112.10px;font-size:13.40px;color:#555;left:1891.40px;">20%</div><svg class="b" style="left:1955.80px;top:1117.74px;" width="9.00" height="5.00" viewBox="0 0 9 5"><path d="M0,0 L8.4,0 L4.2,4.6 Z" fill="#888"/></svg><div class="b" style="left:1992.10px;top:1102.84px;width:201.60px;height:24.30px;background:#fff;border:1px solid #c6c6c6;"></div><div class="t" style="top:1108.35px;font-size:13.10px;color:#3a3a3a;right:363.20px;font-weight:bold;">13 500,00 <svg class="rub" viewBox="0 0 620 716" width="0.62em" height="0.716em"><path d="M160,65 V716 M160,65 H370 Q575,65 575,222 Q575,347 370,347 H40 M40,540 H470" fill="none" stroke="currentColor" stroke-width="130"/></svg></div><div class="b" style="left:2451.50px;top:1103.04px;width:22.10px;height:23.90px;background:#f4f4f4;border:1px solid #dcdcdc;border-radius:3px;"></div><svg class="b" style="left:2457.50px;top:1109.94px;" width="10.00" height="10.00" viewBox="0 0 10 10"><path d="M1.6,1.6 L8.4,8.4 M8.4,1.6 L1.6,8.4" stroke="#333" stroke-width="2.5"/></svg><div class="t" style="top:1164.87px;font-size:15.65px;color:#333;left:316.60px;">5</div><div class="b" style="left:339.00px;top:1163.22px;width:22.00px;height:22.70px;background:#fff;"></div><svg class="b" style="left:339.00px;top:1163.22px;" width="22.00" height="23.00" viewBox="0 0 22 23"><ellipse cx="11" cy="11.5" rx="9.5" ry="9.5" fill="#c02838"/><circle cx="19.2" cy="9.4" r="2.0" fill="#e8b0a8"/><circle cx="10.4" cy="12.0" r="1.0" fill="#f4e0d8"/><circle cx="14.7" cy="11.9" r="2.2" fill="#c02838"/><circle cx="17.9" cy="15.1" r="1.4" fill="#c02838"/><circle cx="15.5" cy="6.3" r="1.4" fill="#f0d0c8"/><circle cx="14.5" cy="10.3" r="1.3" fill="#c02838"/><circle cx="4.5" cy="12.9" r="1.2" fill="#e8b0a8"/><circle cx="12.2" cy="10.1" r="0.9" fill="#f4e0d8"/><circle cx="13.6" cy="3.7" r="1.2" fill="#802030"/><circle cx="9.7" cy="13.5" r="1.8" fill="#d88880"/><circle cx="13.6" cy="19.4" r="0.9" fill="#403040"/><circle cx="3.2" cy="13.4" r="1.6" fill="#e8b0a8"/><circle cx="18.7" cy="6.9" r="1.1" fill="#d88880"/><circle cx="13.7" cy="17.5" r="0.9" fill="#802030"/><circle cx="14.8" cy="17.5" r="0.9" fill="#e8b0a8"/><circle cx="13.9" cy="12.9" r="1.9" fill="#c02838"/><circle cx="17.4" cy="14.6" r="1.9" fill="#403040"/><circle cx="14.0" cy="6.0" r="1.1" fill="#802030"/><circle cx="7.9" cy="19.2" r="1.9" fill="#f4e0d8"/><circle cx="16.6" cy="6.3" r="1.6" fill="#403040"/><circle cx="3.3" cy="10.4" r="1.7" fill="#c02838"/><circle cx="11.0" cy="12.9" r="2.0" fill="#802030"/><circle cx="13.8" cy="14.3" r="1.2" fill="#c02838"/><circle cx="13.7" cy="5.0" r="1.3" fill="#d88880"/><circle cx="12.1" cy="8.0" r="0.9" fill="#403040"/><circle cx="18.5" cy="12.0" r="1.1" fill="#e8b0a8"/><circle cx="5.9" cy="15.7" r="1.2" fill="#e8b0a8"/><circle cx="12.0" cy="15.7" r="1.2" fill="#f4e0d8"/><circle cx="8.1" cy="4.3" r="1.8" fill="#802030"/><circle cx="6.7" cy="11.3" r="1.6" fill="#e8b0a8"/><circle cx="3.5" cy="12.5" r="0.8" fill="#f4e0d8"/><circle cx="16.1" cy="7.0" r="1.4" fill="#d88880"/><circle cx="12.5" cy="12.2" r="0.9" fill="#f4e0d8"/><circle cx="12.2" cy="16.9" r="2.0" fill="#d88880"/><circle cx="8.7" cy="12.4" r="1.6" fill="#d88880"/><circle cx="6.1" cy="17.8" r="2.3" fill="#802030"/><circle cx="14.8" cy="11.0" r="1.2" fill="#c02838"/><circle cx="10.5" cy="18.0" r="1.5" fill="#403040"/><circle cx="12.6" cy="14.8" r="2.1" fill="#f0d0c8"/><circle cx="10.7" cy="9.3" r="1.3" fill="#c02838"/><circle cx="8.1" cy="12.7" r="2.1" fill="#802030"/><circle cx="14.4" cy="14.3" r="1.9" fill="#f4e0d8"/><circle cx="13.5" cy="12.7" r="1.3" fill="#f0d0c8"/><circle cx="2.7" cy="13.0" r="1.9" fill="#d88880"/><circle cx="6.8" cy="3.7" r="1.8" fill="#e8b0a8"/><circle cx="14.2" cy="16.0" r="1.0" fill="#f0d0c8"/><circle cx="16.4" cy="18.3" r="1.3" fill="#e8b0a8"/><circle cx="14.4" cy="3.4" r="2.2" fill="#c02838"/><circle cx="14.7" cy="4.6" r="1.7" fill="#e8b0a8"/><circle cx="15.8" cy="17.5" r="2.1" fill="#f0d0c8"/><circle cx="16.3" cy="17.0" r="0.8" fill="#f0d0c8"/><circle cx="8.3" cy="6.0" r="1.1" fill="#d88880"/><circle cx="14.8" cy="8.6" r="0.8" fill="#403040"/><circle cx="8.8" cy="19.1" r="1.8" fill="#e8b0a8"/><circle cx="4.9" cy="15.0" r="1.2" fill="#802030"/><circle cx="7.9" cy="14.7" r="1.8" fill="#f4e0d8"/><circle cx="17.2" cy="9.5" r="2.4" fill="#c02838"/><circle cx="19.4" cy="9.9" r="1.3" fill="#f4e0d8"/><circle cx="5.1" cy="12.6" r="2.2" fill="#802030"/><circle cx="8.9" cy="4.6" r="2.0" fill="#d88880"/><circle cx="6.5" cy="4.7" r="0.9" fill="#f0d0c8"/><circle cx="8.0" cy="5.9" r="1.9" fill="#e8b0a8"/><circle cx="4.2" cy="17.2" r="2.2" fill="#f4e0d8"/><circle cx="7.3" cy="3.3" r="1.9" fill="#d88880"/><circle cx="12.1" cy="11.7" r="0.9" fill="#d88880"/><circle cx="12.6" cy="15.9" r="1.0" fill="#f4e0d8"/><circle cx="12.3" cy="10.3" r="1.0" fill="#c02838"/><circle cx="15.6" cy="9.1" r="1.9" fill="#802030"/><circle cx="4.2" cy="7.4" r="1.3" fill="#d88880"/><circle cx="19.3" cy="13.0" r="1.4" fill="#e8b0a8"/></svg><div class="b" style="left:373.20px;top:1164.72px;width:21.30px;height:19.90px;background:#ececec;border-radius:3px;"></div><div class="t" style="top:1168.84px;font-size:12.50px;color:#111;left:383.90px;width:0;display:flex;justify-content:center;font-weight:bold;">т</div><div class="t" style="top:1165.54px;font-size:15.45px;color:#3c8dbc;left:399.60px;">Букет № 5</div><div class="b" style="left:613.90px;top:1162.12px;width:39.40px;height:20.40px;background:#ececec;border-radius:3px;"></div><div class="t" style="top:1166.24px;font-size:12.50px;color:#111;left:633.60px;width:0;display:flex;justify-content:center;font-weight:bold;">Т68</div><div class="b" style="left:839.10px;top:1163.92px;width:57.40px;height:22.00px;background:#ececec;border-radius:3px;"></div><div class="t" style="top:1168.54px;font-size:12.50px;color:#111;left:867.80px;width:0;display:flex;justify-content:center;font-weight:bold;">компл</div><div class="t" style="top:1164.88px;font-size:15.40px;color:#333;left:953.20px;">1 190.00 <svg class="rub" viewBox="0 0 620 716" width="0.62em" height="0.716em"><path d="M160,40 V716 M160,40 H370 Q575,40 575,222 Q575,372 370,372 H40 M40,540 H470" fill="none" stroke="currentColor" stroke-width="80"/></svg></div><div class="b" style="left:1219.30px;top:1162.32px;width:123.40px;height:24.40px;background:#fff;border:1px solid #c6c6c6;border-radius:2px;"></div><div class="t" style="top:1168.18px;font-size:13.40px;color:#555;right:1214.40px;">1 190,00 <svg class="rub" viewBox="0 0 620 716" width="0.62em" height="0.716em"><path d="M160,40 V716 M160,40 H370 Q575,40 575,222 Q575,372 370,372 H40 M40,540 H470" fill="none" stroke="currentColor" stroke-width="80"/></svg></div><div class="t" style="top:1189.98px;font-size:15.40px;color:#8a8a8a;right:1207.80px;">+0,00 %</div><div class="b" style="left:1521.20px;top:1162.12px;width:78.60px;height:24.50px;background:#fff;border:1px solid #c6c6c6;"></div><div class="t" style="top:1168.48px;font-size:13.40px;color:#555;left:1561.40px;width:0;display:flex;justify-content:center;">10</div><div class="t" style="top:1164.77px;font-size:15.65px;color:#333;left:1715.90px;">0.00 <svg class="rub" viewBox="0 0 620 716" width="0.62em" height="0.716em"><path d="M160,40 V716 M160,40 H370 Q575,40 575,222 Q575,372 370,372 H40 M40,540 H470" fill="none" stroke="currentColor" stroke-width="80"/></svg></div><div class="b" style="left:1879.00px;top:1162.32px;width:100.20px;height:33.50px;background:#fff;border:1px solid #d4d4d4;border-radius:4px;"></div><div class="t" style="top:1171.58px;font-size:13.40px;color:#555;left:1891.40px;">20%</div><svg class="b" style="left:1955.80px;top:1177.22px;" width="9.00" height="5.00" viewBox="0 0 9 5"><path d="M0,0 L8.4,0 L4.2,4.6 Z" fill="#888"/></svg><div class="b" style="left:1992.10px;top:1162.32px;width:201.60px;height:24.30px;background:#fff;border:1px solid #c6c6c6;"></div><div class="t" style="top:1167.83px;font-size:13.10px;color:#3a3a3a;right:363.20px;font-weight:bold;">11 900,00 <svg class="rub" viewBox="0 0 620 716" width="0.62em" height="0.716em"><path d="M160,65 V716 M160,65 H370 Q575,65 575,222 Q575,347 370,347 H40 M40,540 H470" fill="none" stroke="currentColor" stroke-width="130"/></svg></div><div class="b" style="left:2451.50px;top:1162.52px;width:22.10px;height:23.90px;background:#f4f4f4;border:1px solid #dcdcdc;border-radius:3px;"></div><svg class="b" style="left:2457.50px;top:1169.42px;" width="10.00" height="10.00" viewBox="0 0 10 10"><path d="M1.6,1.6 L8.4,8.4 M8.4,1.6 L1.6,8.4" stroke="#333" stroke-width="2.5"/></svg><div class="t" style="top:1239.75px;font-size:15.65px;color:#80838f;left:307.40px;font-weight:bold;">Итого:</div><div class="t" style="top:1239.75px;font-size:15.65px;color:#111;left:361.90px;font-weight:bold;">76 400.00 <svg class="rub" viewBox="0 0 620 716" width="0.62em" height="0.716em"><path d="M160,65 V716 M160,65 H370 Q575,65 575,222 Q575,347 370,347 H40 M40,540 H470" fill="none" stroke="currentColor" stroke-width="130"/></svg></div><div class="t" style="top:1261.75px;font-size:15.65px;color:#80838f;left:307.40px;font-weight:bold;">Без налога НДС</div><div class="b" style="left:298.00px;top:1305.30px;width:2239.90px;height:94.70px;background:#fff;border-radius:6px;box-shadow:0 1px 1px rgba(0,0,0,0.07), 0 -1px 0 rgba(30,40,80,0.04);"></div><div class="b" style="left:298.00px;top:1305.30px;width:2239.90px;height:94.70px;background:#f7f8fa;border-radius:6px 6px 0 0;"></div><svg class="b" style="left:307.40px;top:1320.60px;" width="20.00" height="15.00" viewBox="0 0 20 15"><g fill="#7b7e8b"><rect x="0" y="0" width="13" height="3"/><rect x="0" y="4.2" width="18.8" height="3"/><rect x="0" y="8.4" width="16.2" height="3"/></g></svg><div class="t" style="top:1320.07px;font-size:20.00px;color:#7d808f;left:338.40px;">Действия</div>
</body></html>
